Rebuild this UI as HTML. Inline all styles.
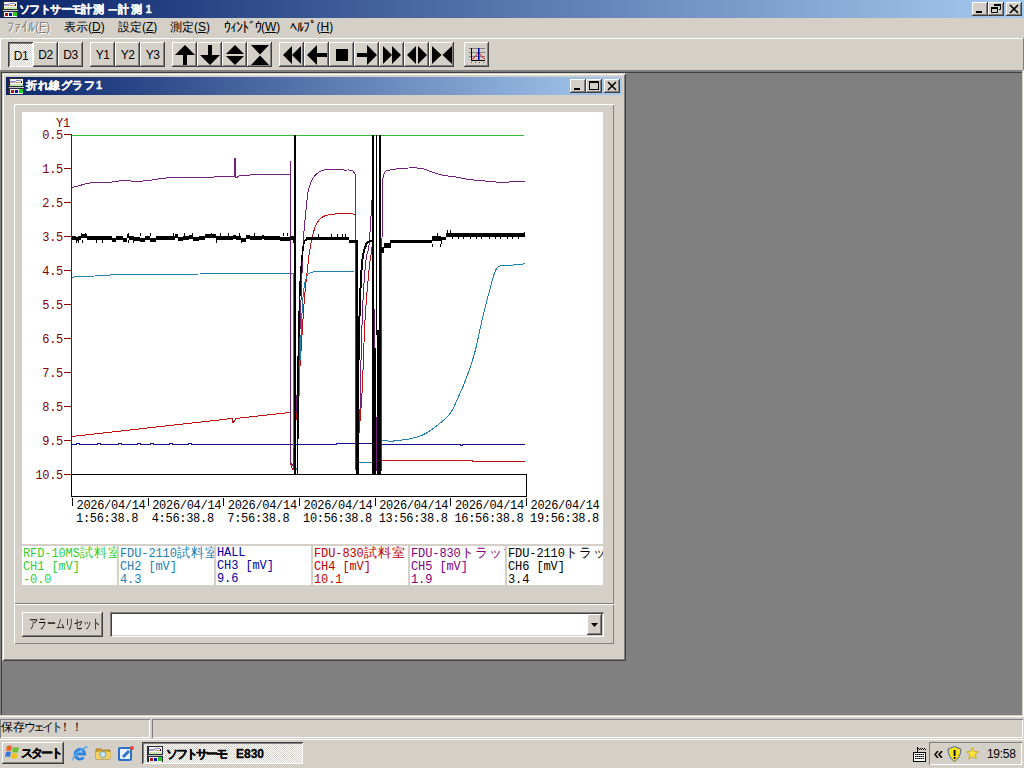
<!DOCTYPE html>
<html><head><meta charset="utf-8">
<style>
*{box-sizing:border-box}
html,body{margin:0;padding:0}
body{width:1024px;height:768px;position:relative;overflow:hidden;background:#D4D0C8;font-family:"Liberation Sans",sans-serif;font-size:12px;color:#000}
.a{position:absolute}
.raised{background:#D4D0C8;box-shadow:inset -1px -1px #404040,inset 1px 1px #fff,inset -2px -2px #808080}
.tbtn{position:absolute;top:42px;width:25px;height:25px;background:#D4D0C8;box-shadow:inset -1px -1px #404040,inset 1px 1px #fff,inset -2px -2px #808080}
.tbtn span{position:absolute;left:0;right:0;top:6px;text-align:center;font-size:12px;letter-spacing:-0.5px;line-height:14px}
.tbtn svg{position:absolute;left:0;top:0}
.dither{background-color:#D4D0C8;background-image:repeating-conic-gradient(#fff 0 25%,#D4D0C8 0 50%);background-size:2px 2px}
.capbtn{position:absolute;width:16px;height:14px;background:#D4D0C8;box-shadow:inset -1px -1px #404040,inset 1px 1px #fff,inset -2px -2px #808080}
.capbtn svg{position:absolute;left:0;top:0}
.menu{position:absolute;top:20px;font-size:12px;line-height:14px;white-space:nowrap}
.hk{font-size:14px;letter-spacing:0px;vertical-align:-1px}
.mono{font-family:"Liberation Mono",monospace}
.lg{top:546px;height:39px;background:#fff;overflow:hidden;white-space:nowrap;font-family:"Liberation Mono",monospace;font-size:12px;letter-spacing:-0.1px;line-height:13px;padding-left:1px;padding-top:1px}
.cj{font-size:13px;letter-spacing:1px}
</style></head><body>

<!-- main title bar -->
<div class="a" style="left:0;top:0;width:1024px;height:18px;background:linear-gradient(to right,#0A246A,#A6CAF0)"></div>
<svg class="a" style="left:2px;top:1px" width="16" height="16" viewBox="0 0 16 16">
<rect x="0" y="0" width="16" height="16" fill="#2a2a3a"/>
<rect x="2" y="1" width="13" height="7" fill="#f8f8f8"/>
<rect x="2" y="3" width="6" height="1" fill="#9090d0"/><rect x="8" y="2" width="5" height="1" fill="#9090d0"/>
<rect x="2" y="4" width="5" height="1" fill="#c0a0c0"/><rect x="8" y="4" width="5" height="1" fill="#e0a060"/>
<rect x="13" y="3" width="1" height="2" fill="#400040"/>
<rect x="2" y="6" width="13" height="2" fill="#c8e8b0"/>
<rect x="1" y="9" width="15" height="1" fill="#c8c8c8"/>
<rect x="2" y="11" width="13" height="5" fill="#f8f8f8"/>
<rect x="3" y="12" width="3" height="3" fill="#b01010"/>
<rect x="7" y="12" width="3" height="3" fill="#0010b0"/>
<rect x="11" y="11" width="4" height="4" fill="#20d020"/>
</svg>
<div class="a" style="left:19px;top:2px;color:#fff;font-weight:bold;font-size:11px;line-height:14px;white-space:nowrap;letter-spacing:0px;-webkit-text-stroke:0.3px #fff"><span style="letter-spacing:-0.6px">ソフトサーモ</span><span style="letter-spacing:1px">計測</span><span style="margin-left:2px;display:inline-block;transform:scaleX(1.6)">－</span><span style="letter-spacing:1.5px;margin-left:0px">計測</span><span style="margin-left:2px">1</span></div>
<div class="capbtn" style="left:972px;top:2px"><svg width="16" height="14"><rect x="4" y="9" width="6" height="2" fill="#000"/></svg></div>
<div class="capbtn" style="left:988px;top:2px"><svg width="16" height="14"><path d="M6.5 2.5h6v5h-1.5M6 3h6.5M3.5 5.5h6v5h-6z M3.5 6h6" stroke="#000" fill="none"/><rect x="6" y="2" width="7" height="2" fill="#000"/><rect x="3" y="5" width="7" height="2" fill="#000"/></svg></div>
<div class="capbtn" style="left:1006px;top:2px"><svg width="16" height="14"><path d="M4 3l8 8M12 3l-8 8" stroke="#000" stroke-width="1.6"/></svg></div>

<!-- menu -->
<div class="menu" style="left:7px;color:#808080;text-shadow:1px 1px #fff"><span class="hk">ﾌｧｲﾙ</span>(<u>F</u>)</div>
<div class="menu" style="left:64px">表示(<u>D</u>)</div>
<div class="menu" style="left:118px">設定(<u>Z</u>)</div>
<div class="menu" style="left:170px">測定(<u>S</u>)</div>
<div class="menu" style="left:224px"><span class="hk" style="letter-spacing:-1px">ｳｨﾝﾄﾞｳ</span>(<u>W</u>)</div>
<div class="menu" style="left:290px"><span class="hk" style="letter-spacing:-0.5px">ﾍﾙﾌﾟ</span>(<u>H</u>)</div>

<!-- toolbar -->
<div class="a" style="left:0;top:38px;width:1024px;height:1px;background:#fff"></div>
<div class="a" style="left:0;top:38px;width:1px;height:32px;background:#fff"></div>
<div class="a" style="left:1023px;top:38px;width:1px;height:32px;background:#808080"></div>

<div class="tbtn dither" style="left:8px;box-shadow:inset 1px 1px #404040,inset -1px -1px #fff,inset 2px 2px #808080"><span style="top:7px;left:1px">D1</span></div>
<div class="tbtn" style="left:33px"><span>D2</span></div>
<div class="tbtn" style="left:58px"><span>D3</span></div>
<div class="tbtn" style="left:90px"><span>Y1</span></div>
<div class="tbtn" style="left:115px"><span>Y2</span></div>
<div class="tbtn" style="left:140px"><span>Y3</span></div>
<div class="tbtn" style="left:172px"><svg width="25" height="25" fill="#000"><path d="M3 13L13 3L23 13Z" /><rect x="11" y="12.5" width="4" height="10.5"/></svg></div>
<div class="tbtn" style="left:197px"><svg width="25" height="25" fill="#000"><rect x="11" y="3" width="4" height="10.5"/><path d="M3 13L23 13L13 23Z"/></svg></div>
<div class="tbtn" style="left:222px"><svg width="25" height="25" fill="#000"><path d="M4 12L13 3L22 12Z"/><path d="M4 14L22 14L13 23Z"/></svg></div>
<div class="tbtn" style="left:247px"><svg width="25" height="25" fill="#000"><path d="M4 3H22L13 12.5Z"/><path d="M13 13.5L22 23H4Z"/></svg></div>
<div class="tbtn" style="left:279px"><svg width="25" height="25" fill="#000"><path d="M4 13L13 4V22Z"/><path d="M13 13L22 4V22Z"/></svg></div>
<div class="tbtn" style="left:304px"><svg width="25" height="25" fill="#000"><path d="M3 13L13 3V23Z"/><rect x="12.5" y="11" width="10.5" height="4"/></svg></div>
<div class="tbtn" style="left:329px"><svg width="25" height="25" fill="#000"><rect x="7" y="7" width="12" height="12"/></svg></div>
<div class="tbtn" style="left:354px"><svg width="25" height="25" fill="#000"><rect x="3" y="11" width="10.5" height="4"/><path d="M23 13L13 3V23Z"/></svg></div>
<div class="tbtn" style="left:379px"><svg width="25" height="25" fill="#000"><path d="M4 4L13 13L4 22Z"/><path d="M13 4L22 13L13 22Z"/></svg></div>
<div class="tbtn" style="left:404px"><svg width="25" height="25" fill="#000"><path d="M3 13L12 4V22Z"/><path d="M23 13L14 4V22Z"/></svg></div>
<div class="tbtn" style="left:429px"><svg width="25" height="25" fill="#000"><path d="M3 4L12.5 13L3 22Z"/><path d="M23 4L13.5 13L23 22Z"/></svg></div>
<div class="tbtn" style="left:464px"><svg width="25" height="25" shape-rendering="crispEdges">
<rect x="5" y="6" width="16" height="1" fill="#808080"/><rect x="5" y="10" width="16" height="1" fill="#808080"/><rect x="5" y="14" width="16" height="1" fill="#808080"/>
<path d="M8 17 L10 16 L13 12 L14.5 10.5 L16 12 L19 16 L21 17" stroke="#e02020" stroke-width="1" fill="none" shape-rendering="auto"/>
<rect x="14" y="6" width="1.5" height="12" fill="#0000a0" shape-rendering="auto"/>
<rect x="7" y="6" width="1" height="13" fill="#000"/><rect x="7" y="18" width="14" height="1" fill="#000"/>
<rect x="7" y="20" width="1" height="1" fill="#606060"/><rect x="11" y="20" width="1" height="1" fill="#606060"/><rect x="15" y="20" width="1" height="1" fill="#606060"/><rect x="19" y="20" width="1" height="1" fill="#606060"/>
</svg></div>

<!-- MDI client -->
<div class="a" style="left:0;top:70px;width:1024px;height:647px;background:#808080"></div>
<div class="a" style="left:0;top:70px;width:1024px;height:2px;background:#808080"></div>
<div class="a" style="left:1px;top:72px;width:1021px;height:1px;background:#404040"></div>
<div class="a" style="left:1px;top:72px;width:1px;height:643px;background:#404040"></div>
<div class="a" style="left:0;top:715px;width:1024px;height:1px;background:#D4D0C8"></div>
<div class="a" style="left:0;top:716px;width:1024px;height:1px;background:#fff"></div>
<div class="a" style="left:1022px;top:71px;width:1px;height:645px;background:#D4D0C8"></div>
<div class="a" style="left:1023px;top:70px;width:1px;height:647px;background:#fff"></div>

<!-- child window -->
<div class="a" style="left:2px;top:73px;width:624px;height:588px;background:#D4D0C8;box-shadow:inset 1px 1px #D4D0C8,inset -1px -1px #404040,inset 2px 2px #fff,inset -2px -2px #808080"></div>
<div class="a" style="left:6px;top:77px;width:616px;height:18px;background:linear-gradient(to right,#0A246A,#A6CAF0)"></div>
<svg class="a" style="left:8px;top:78px" width="16" height="16" viewBox="0 0 16 16">
<rect x="0" y="0" width="16" height="16" fill="#2a2a3a"/>
<rect x="2" y="1" width="13" height="7" fill="#f8f8f8"/>
<rect x="2" y="3" width="6" height="1" fill="#9090d0"/><rect x="8" y="2" width="5" height="1" fill="#9090d0"/>
<rect x="2" y="4" width="5" height="1" fill="#c0a0c0"/><rect x="8" y="4" width="5" height="1" fill="#e0a060"/>
<rect x="13" y="3" width="1" height="2" fill="#400040"/>
<rect x="2" y="6" width="13" height="2" fill="#c8e8b0"/>
<rect x="1" y="9" width="15" height="1" fill="#c8c8c8"/>
<rect x="2" y="11" width="13" height="5" fill="#f8f8f8"/>
<rect x="3" y="12" width="3" height="3" fill="#b01010"/>
<rect x="7" y="12" width="3" height="3" fill="#0010b0"/>
<rect x="11" y="11" width="4" height="4" fill="#20d020"/>
</svg>
<div class="a" style="left:26px;top:78px;color:#fff;font-weight:bold;font-size:11px;line-height:14px;white-space:nowrap;-webkit-text-stroke:0.3px #fff"><span style="letter-spacing:0.5px">折れ線グラフ</span><span style="margin-left:1px">1</span></div>
<div class="capbtn" style="left:570px;top:79px"><svg width="16" height="14"><rect x="4" y="9" width="6" height="2" fill="#000"/></svg></div>
<div class="capbtn" style="left:586px;top:79px"><svg width="16" height="14"><rect x="3.5" y="2.5" width="9" height="8" stroke="#000" fill="none"/><rect x="3" y="2" width="10" height="2" fill="#000"/></svg></div>
<div class="capbtn" style="left:604px;top:79px"><svg width="16" height="14"><path d="M4 3l8 8M12 3l-8 8" stroke="#000" stroke-width="1.6"/></svg></div>

<!-- upper panel -->
<div class="a" style="left:14px;top:104px;width:600px;height:500px;box-shadow:inset 1px 1px #fff,inset -1px -1px #808080"></div>
<div class="a" style="left:22px;top:112px;width:581px;height:432px;background:#fff"></div>
<svg class="a" style="left:22px;top:112px" width="581" height="432" viewBox="22 112 581 432">
<g shape-rendering="crispEdges">
<rect x="71" y="134" width="1" height="341" fill="#800000"/>
<rect x="64" y="134" width="7" height="1" fill="#800000"/>
<rect x="64" y="168" width="7" height="1" fill="#800000"/>
<rect x="64" y="202" width="7" height="1" fill="#800000"/>
<rect x="64" y="236" width="7" height="1" fill="#800000"/>
<rect x="64" y="270" width="7" height="1" fill="#800000"/>
<rect x="64" y="304" width="7" height="1" fill="#800000"/>
<rect x="64" y="338" width="7" height="1" fill="#800000"/>
<rect x="64" y="372" width="7" height="1" fill="#800000"/>
<rect x="64" y="406" width="7" height="1" fill="#800000"/>
<rect x="64" y="440" width="7" height="1" fill="#800000"/>
<rect x="64" y="474" width="7" height="1" fill="#800000"/>
<rect x="71.5" y="474.5" width="455" height="22" fill="none" stroke="#000" stroke-width="1"/>
<rect x="72" y="498" width="1" height="8" fill="#000"/>
<rect x="148" y="498" width="1" height="8" fill="#000"/>
<rect x="223" y="498" width="1" height="8" fill="#000"/>
<rect x="299" y="498" width="1" height="8" fill="#000"/>
<rect x="375" y="498" width="1" height="8" fill="#000"/>
<rect x="450" y="498" width="1" height="8" fill="#000"/>
<rect x="526" y="498" width="1" height="8" fill="#000"/>
</g>
<g font-family="Liberation Mono, monospace" font-size="12" letter-spacing="-0.3">
<text x="56" y="127" fill="#800000">Y1</text>
<text x="63" y="138.5" fill="#800000" text-anchor="end">0.5</text>
<text x="63" y="172.5" fill="#800000" text-anchor="end">1.5</text>
<text x="63" y="206.5" fill="#800000" text-anchor="end">2.5</text>
<text x="63" y="240.5" fill="#800000" text-anchor="end">3.5</text>
<text x="63" y="274.5" fill="#800000" text-anchor="end">4.5</text>
<text x="63" y="308.5" fill="#800000" text-anchor="end">5.5</text>
<text x="63" y="342.5" fill="#800000" text-anchor="end">6.5</text>
<text x="63" y="376.5" fill="#800000" text-anchor="end">7.5</text>
<text x="63" y="410.5" fill="#800000" text-anchor="end">8.5</text>
<text x="63" y="444.5" fill="#800000" text-anchor="end">9.5</text>
<text x="63" y="478.5" fill="#800000" text-anchor="end">10.5</text>
<text x="76.5" y="509" fill="#000">2026/04/14</text>
<text x="76.0" y="522" fill="#000">1:56:38.8</text>
<text x="152.2" y="509" fill="#000">2026/04/14</text>
<text x="151.7" y="522" fill="#000">4:56:38.8</text>
<text x="227.8" y="509" fill="#000">2026/04/14</text>
<text x="227.3" y="522" fill="#000">7:56:38.8</text>
<text x="303.5" y="509" fill="#000">2026/04/14</text>
<text x="303.0" y="522" fill="#000">10:56:38.8</text>
<text x="379.2" y="509" fill="#000">2026/04/14</text>
<text x="378.7" y="522" fill="#000">13:56:38.8</text>
<text x="454.9" y="509" fill="#000">2026/04/14</text>
<text x="454.4" y="522" fill="#000">16:56:38.8</text>
<text x="530.5" y="509" fill="#000">2026/04/14</text>
<text x="530.0" y="522" fill="#000">19:56:38.8</text>
</g>
<polyline points="72,135.5 524,135.5" fill="none" stroke="#33bb33" stroke-width="1" shape-rendering="crispEdges"/>
<polyline points="72,444.5 76,444.5 76,443.5 79,443.5 79,444.5 97,444.5 97,443.5 100,443.5 100,444.5 118,444.5 118,443.5 121,443.5 121,444.5 137,444.5 137,443.5 140,443.5 140,444.5 150,444.5 150,443.5 153,443.5 153,444.5 169,444.5 169,443.5 172,443.5 172,444.5 188,444.5 188,443.5 191,443.5 191,444.5 336,444.5 337,443.5 372,443.5 381,444.5 460,444.5 460,445.5 462,445.5 462,444.5 525,444.5" fill="none" stroke="#101090" stroke-width="1" shape-rendering="crispEdges"/>
<polyline points="72,436.5 232,418.5 233,423 236,418.5 290,412.5 290.5,464 293,470 296,420 296.02,419.75 296.04,419.48 296.06,419.21 296.08,418.93 296.1,418.65 296.12,418.35 296.14,418.05 296.17,417.74 296.19,417.43 296.21,417.1 296.24,416.77 296.26,416.43 296.29,416.08 296.32,415.73 296.34,415.37 296.37,415 296.4,414.63 296.43,414.25 296.46,413.86 296.48,413.47 296.51,413.07 296.54,412.67 296.58,412.26 296.61,411.84 296.64,411.42 296.67,410.99 296.7,410.55 296.74,410.11 296.77,409.67 296.8,409.22 296.84,408.76 296.87,408.3 296.91,407.84 296.94,407.37 296.98,406.89 297.01,406.41 297.05,405.93 297.09,405.44 297.12,404.94 297.16,404.44 297.2,403.94 297.23,403.44 297.27,402.93 297.31,402.41 297.35,401.89 297.39,401.37 297.43,400.85 297.47,400.32 297.51,399.79 297.55,399.25 297.59,398.72 297.63,398.17 297.67,397.63 297.71,397.08 297.75,396.53 297.79,395.98 297.83,395.43 297.87,394.87 297.91,394.31 297.96,393.75 298,393.19 298.04,392.62 298.08,392.05 298.12,391.48 298.17,390.91 298.21,390.34 298.25,389.77 298.29,389.19 298.34,388.62 298.38,388.04 298.42,387.46 298.46,386.88 298.51,386.3 298.55,385.72 298.59,385.14 298.64,384.55 298.68,383.97 298.72,383.39 298.76,382.81 298.81,382.22 298.85,381.64 298.89,381.06 298.94,380.47 298.98,379.89 299.02,379.31 299.06,378.73 299.11,378.14 299.15,377.56 299.19,376.98 299.23,376.41 299.27,375.83 299.32,375.25 299.36,374.68 299.4,374.1 299.44,373.53 299.48,372.96 299.52,372.39 299.56,371.82 299.6,371.26 299.64,370.69 299.68,370.13 299.73,369.57 299.76,369.02 299.8,368.46 299.84,367.91 299.88,367.36 299.92,366.81 299.96,366.27 300,365.73 300.04,365.19 300.07,364.66 300.11,364.12 300.15,363.6 300.19,363.07 300.22,362.55 300.26,362.03 300.29,361.52 300.33,361.01 300.37,360.5 300.4,360 300.43,359.5 300.47,359 300.5,358.49 300.54,357.98 300.57,357.48 300.61,356.96 300.64,356.45 300.68,355.94 300.71,355.42 300.75,354.9 300.78,354.39 300.81,353.87 300.85,353.34 300.88,352.82 300.92,352.29 300.95,351.77 300.99,351.24 301.02,350.71 301.05,350.18 301.09,349.65 301.12,349.12 301.16,348.59 301.19,348.05 301.22,347.52 301.26,346.98 301.29,346.45 301.33,345.91 301.36,345.37 301.39,344.84 301.43,344.3 301.46,343.76 301.5,343.22 301.53,342.68 301.56,342.14 301.6,341.6 301.63,341.05 301.67,340.51 301.7,339.97 301.73,339.43 301.77,338.89 301.8,338.35 301.83,337.81 301.87,337.26 301.9,336.72 301.93,336.18 301.97,335.64 302,335.1 302.03,334.56 302.07,334.02 302.1,333.48 302.13,332.94 302.17,332.4 302.2,331.87 302.23,331.33 302.27,330.79 302.3,330.26 302.33,329.72 302.37,329.19 302.4,328.66 302.43,328.12 302.46,327.59 302.5,327.06 302.53,326.54 302.56,326.01 302.59,325.48 302.63,324.96 302.66,324.43 302.69,323.91 302.72,323.39 302.76,322.87 302.79,322.36 302.82,321.84 302.85,321.33 302.89,320.81 302.92,320.3 302.95,319.79 302.98,319.29 303.01,318.78 303.05,318.28 303.08,317.78 303.11,317.28 303.14,316.78 303.17,316.29 303.2,315.79 303.24,315.3 303.27,314.82 303.3,314.33 303.33,313.85 303.36,313.37 303.39,312.89 303.42,312.42 303.46,311.94 303.49,311.47 303.52,311.01 303.55,310.54 303.58,310.08 303.61,309.62 303.64,309.17 303.67,308.71 303.7,308.26 303.73,307.82 303.76,307.37 303.79,306.93 303.82,306.5 303.85,306.06 303.88,305.63 303.91,305.21 303.94,304.79 303.97,304.37 304,303.95 304.03,303.54 304.06,303.13 304.09,302.72 304.12,302.32 304.15,301.93 304.18,301.53 304.21,301.14 304.24,300.76 304.27,300.38 304.3,300 304.36,299.26 304.42,298.53 304.47,297.81 304.53,297.11 304.59,296.42 304.65,295.74 304.7,295.07 304.76,294.42 304.82,293.78 304.87,293.15 304.93,292.53 304.98,291.92 305.04,291.32 305.09,290.73 305.15,290.16 305.2,289.59 305.26,289.03 305.31,288.48 305.36,287.94 305.42,287.41 305.47,286.88 305.53,286.37 305.58,285.86 305.63,285.36 305.68,284.87 305.74,284.38 305.79,283.9 305.84,283.43 305.89,282.96 305.94,282.5 306,282.04 306.05,281.59 306.1,281.15 306.15,280.71 306.2,280.27 306.25,279.84 306.3,279.41 306.35,278.99 306.4,278.57 306.45,278.15 306.5,277.73 306.55,277.32 306.6,276.91 306.64,276.5 306.69,276.09 306.74,275.69 306.79,275.28 306.84,274.88 306.89,274.48 306.93,274.07 306.98,273.67 307.03,273.27 307.08,272.86 307.12,272.46 307.17,272.05 307.22,271.65 307.26,271.24 307.31,270.83 307.35,270.42 307.4,270 307.47,269.38 307.53,268.77 307.6,268.17 307.66,267.59 307.72,267.01 307.78,266.44 307.84,265.88 307.9,265.33 307.96,264.79 308.01,264.26 308.07,263.73 308.12,263.21 308.18,262.7 308.23,262.2 308.29,261.7 308.34,261.2 308.39,260.71 308.44,260.23 308.5,259.75 308.55,259.28 308.6,258.8 308.66,258.33 308.71,257.87 308.77,257.4 308.82,256.94 308.88,256.48 308.93,256.03 308.99,255.57 309.05,255.11 309.11,254.65 309.17,254.2 309.24,253.74 309.3,253.28 309.37,252.82 309.43,252.36 309.5,251.89 309.57,251.42 309.65,250.95 309.72,250.48 309.8,250 309.89,249.48 309.97,248.95 310.06,248.43 310.16,247.9 310.25,247.36 310.35,246.83 310.44,246.29 310.54,245.75 310.64,245.22 310.75,244.68 310.85,244.14 310.95,243.6 311.06,243.06 311.17,242.53 311.27,242 311.38,241.46 311.49,240.94 311.6,240.41 311.71,239.89 311.82,239.37 311.93,238.86 312.05,238.35 312.16,237.85 312.27,237.35 312.38,236.86 312.49,236.37 312.61,235.9 312.72,235.43 312.83,234.96 312.94,234.51 313.05,234.07 313.16,233.63 313.27,233.2 313.38,232.79 313.49,232.38 313.59,231.98 313.7,231.6 313.89,230.92 314.08,230.26 314.27,229.64 314.46,229.05 314.64,228.48 314.82,227.94 315.01,227.42 315.19,226.92 315.37,226.44 315.56,225.98 315.74,225.54 315.93,225.11 316.12,224.69 316.32,224.29 316.52,223.89 316.72,223.5 316.93,223.12 317.15,222.75 317.37,222.37 317.6,222 317.91,221.52 318.23,221.05 318.54,220.62 318.87,220.2 319.2,219.8 319.53,219.43 319.88,219.07 320.23,218.72 320.59,218.4 320.96,218.09 321.34,217.79 321.74,217.5 322.14,217.22 322.56,216.96 323,216.7 323.42,216.47 323.86,216.26 324.31,216.06 324.77,215.87 325.24,215.7 325.73,215.54 326.22,215.39 326.72,215.26 327.23,215.13 327.74,215.01 328.26,214.89 328.78,214.79 329.31,214.68 329.84,214.59 330.37,214.49 330.9,214.4 331.37,214.32 331.85,214.26 332.34,214.2 332.82,214.15 333.32,214.1 333.81,214.06 334.31,214.03 334.81,214 335.32,213.97 335.83,213.95 336.34,213.93 336.86,213.91 337.37,213.9 337.89,213.88 338.42,213.86 338.94,213.84 339.47,213.82 340,213.8 340.49,213.78 341.01,213.76 341.55,213.74 342.1,213.72 342.67,213.7 343.25,213.68 343.83,213.66 344.42,213.64 345,213.63 345.57,213.61 346.13,213.6 346.68,213.58 347.2,213.57 347.71,213.56 348.18,213.55 348.63,213.54 349.03,213.53 349.4,213.52 349.72,213.51 350,213.5 355.6,214.4 356,470 358,445 358.02,444.75 358.04,444.48 358.06,444.22 358.08,443.94 358.11,443.66 358.13,443.36 358.15,443.07 358.18,442.76 358.21,442.45 358.23,442.13 358.26,441.8 358.29,441.47 358.32,441.13 358.34,440.79 358.37,440.43 358.41,440.07 358.44,439.71 358.47,439.34 358.5,438.96 358.53,438.58 358.57,438.19 358.6,437.79 358.64,437.39 358.67,436.98 358.71,436.57 358.74,436.15 358.78,435.72 358.82,435.29 358.85,434.86 358.89,434.42 358.93,433.97 358.97,433.52 359.01,433.07 359.05,432.61 359.09,432.14 359.13,431.67 359.17,431.2 359.21,430.72 359.25,430.23 359.29,429.74 359.33,429.25 359.38,428.75 359.42,428.25 359.46,427.75 359.51,427.24 359.55,426.72 359.59,426.2 359.64,425.68 359.68,425.16 359.72,424.63 359.77,424.1 359.81,423.56 359.86,423.02 359.9,422.48 359.95,421.94 359.99,421.39 360.04,420.84 360.08,420.28 360.13,419.72 360.17,419.16 360.22,418.6 360.26,418.03 360.31,417.47 360.35,416.9 360.4,416.32 360.44,415.75 360.49,415.17 360.53,414.59 360.58,414.01 360.62,413.43 360.67,412.84 360.71,412.25 360.76,411.66 360.8,411.07 360.84,410.48 360.89,409.89 360.93,409.29 360.98,408.7 361.02,408.1 361.06,407.5 361.11,406.9 361.15,406.3 361.19,405.7 361.23,405.09 361.28,404.49 361.32,403.89 361.36,403.28 361.4,402.68 361.44,402.07 361.48,401.47 361.52,400.86 361.56,400.25 361.6,399.65 361.64,399.04 361.68,398.44 361.71,397.83 361.75,397.22 361.79,396.62 361.83,396.01 361.86,395.41 361.9,394.81 361.93,394.2 361.97,393.6 362,393 362.02,392.57 362.05,392.14 362.07,391.7 362.09,391.26 362.12,390.82 362.14,390.38 362.16,389.93 362.19,389.48 362.21,389.03 362.23,388.57 362.26,388.12 362.28,387.66 362.3,387.19 362.32,386.73 362.34,386.26 362.37,385.79 362.39,385.32 362.41,384.84 362.43,384.36 362.45,383.89 362.48,383.4 362.5,382.92 362.52,382.43 362.54,381.95 362.56,381.46 362.58,380.96 362.6,380.47 362.62,379.97 362.64,379.48 362.66,378.98 362.69,378.47 362.71,377.97 362.73,377.47 362.75,376.96 362.77,376.45 362.79,375.94 362.81,375.43 362.83,374.92 362.85,374.41 362.87,373.89 362.89,373.37 362.91,372.85 362.93,372.34 362.95,371.81 362.97,371.29 362.99,370.77 363,370.25 363.02,369.72 363.04,369.19 363.06,368.67 363.08,368.14 363.1,367.61 363.12,367.08 363.14,366.55 363.16,366.02 363.18,365.49 363.2,364.95 363.22,364.42 363.24,363.89 363.25,363.35 363.27,362.82 363.29,362.28 363.31,361.75 363.33,361.21 363.35,360.67 363.37,360.14 363.39,359.6 363.41,359.06 363.42,358.53 363.44,357.99 363.46,357.45 363.48,356.91 363.5,356.38 363.52,355.84 363.54,355.3 363.56,354.76 363.58,354.23 363.59,353.69 363.61,353.15 363.63,352.61 363.65,352.08 363.67,351.54 363.69,351.01 363.71,350.47 363.73,349.94 363.75,349.4 363.76,348.87 363.78,348.34 363.8,347.81 363.82,347.28 363.84,346.75 363.86,346.22 363.88,345.69 363.9,345.16 363.92,344.63 363.94,344.11 363.96,343.58 363.98,343.06 364,342.54 364.01,342.01 364.03,341.49 364.05,340.97 364.07,340.46 364.09,339.94 364.11,339.43 364.13,338.91 364.15,338.4 364.17,337.89 364.19,337.38 364.21,336.87 364.23,336.37 364.25,335.86 364.27,335.36 364.29,334.86 364.31,334.36 364.34,333.86 364.36,333.37 364.38,332.87 364.4,332.38 364.42,331.89 364.44,331.4 364.46,330.92 364.48,330.43 364.5,329.95 364.52,329.47 364.55,329 364.57,328.52 364.59,328.05 364.61,327.58 364.63,327.11 364.66,326.65 364.68,326.19 364.7,325.73 364.72,325.27 364.74,324.81 364.77,324.36 364.79,323.91 364.81,323.47 364.84,323.02 364.86,322.58 364.88,322.14 364.91,321.71 364.93,321.28 364.95,320.85 364.98,320.42 365,320 365.04,319.39 365.07,318.77 365.11,318.16 365.14,317.55 365.18,316.94 365.22,316.33 365.25,315.72 365.29,315.12 365.33,314.51 365.37,313.91 365.41,313.31 365.45,312.71 365.49,312.11 365.53,311.51 365.56,310.92 365.61,310.33 365.65,309.73 365.69,309.14 365.73,308.55 365.77,307.97 365.81,307.38 365.85,306.8 365.89,306.22 365.93,305.64 365.98,305.06 366.02,304.49 366.06,303.91 366.1,303.34 366.15,302.77 366.19,302.21 366.23,301.64 366.28,301.08 366.32,300.52 366.36,299.96 366.41,299.41 366.45,298.85 366.49,298.3 366.54,297.75 366.58,297.21 366.62,296.66 366.67,296.12 366.71,295.58 366.76,295.05 366.8,294.52 366.84,293.99 366.89,293.46 366.93,292.93 366.97,292.41 367.02,291.89 367.06,291.38 367.11,290.86 367.15,290.35 367.19,289.84 367.24,289.34 367.28,288.84 367.32,288.34 367.37,287.84 367.41,287.35 367.45,286.86 367.5,286.38 367.54,285.89 367.58,285.41 367.62,284.94 367.67,284.47 367.71,284 367.75,283.53 367.79,283.07 367.83,282.61 367.87,282.15 367.92,281.7 367.96,281.26 368,280.81 368.04,280.37 368.08,279.93 368.12,279.5 368.16,279.07 368.2,278.65 368.23,278.22 368.27,277.81 368.31,277.39 368.35,276.98 368.39,276.58 368.43,276.17 368.46,275.78 368.5,275.38 368.54,274.99 368.57,274.61 368.61,274.23 368.64,273.85 368.68,273.48 368.71,273.11 368.74,272.75 368.78,272.39 368.81,272.03 368.84,271.68 368.88,271.34 368.91,271 368.94,270.66 368.97,270.33 369,270 369.1,268.95 369.19,267.98 369.28,267.08 369.37,266.25 369.45,265.47 369.53,264.76 369.6,264.1 369.68,263.49 369.75,262.93 369.81,262.41 369.88,261.93 369.94,261.48 370.01,261.06 370.07,260.68 370.12,260.31 370.18,259.97 370.24,259.64 370.3,259.32 370.35,259.01 370.41,258.7 370.46,258.4 370.52,258.09 370.58,257.77 370.63,257.44 370.69,257.09 370.75,256.73 370.81,256.34 370.87,255.93 370.93,255.48 371,255 371.07,254.49 371.14,253.97 371.21,253.43 371.28,252.88 371.36,252.33 371.43,251.76 371.51,251.19 371.59,250.61 371.66,250.03 371.74,249.44 371.82,248.86 371.9,248.28 371.97,247.7 372.05,247.13 372.12,246.56 372.2,246 372.27,245.46 372.34,244.92 372.41,244.4 372.48,243.89 372.55,243.4 372.61,242.92 372.67,242.47 372.73,242.04 372.78,241.63 372.83,241.25 372.88,240.89 372.92,240.56 372.96,240.27 373,240 376,470 380,460.5 472,460.5 473,461.5 525,461.5" fill="none" stroke="#c01010" stroke-width="1" shape-rendering="crispEdges"/>
<polyline points="72,278 75,276.5 95,276 110,275 150,274.5 200,274 260,273.5 293,273.5 293,462 297,470 300,360 300.01,359.74 300.02,359.48 300.04,359.2 300.05,358.91 300.06,358.62 300.07,358.31 300.09,357.99 300.1,357.66 300.12,357.32 300.13,356.98 300.15,356.62 300.16,356.25 300.18,355.88 300.19,355.5 300.21,355.1 300.23,354.7 300.24,354.3 300.26,353.88 300.28,353.45 300.29,353.02 300.31,352.58 300.33,352.13 300.35,351.68 300.37,351.22 300.39,350.75 300.41,350.27 300.43,349.79 300.44,349.3 300.46,348.81 300.48,348.3 300.51,347.8 300.53,347.29 300.55,346.77 300.57,346.24 300.59,345.72 300.61,345.18 300.63,344.64 300.65,344.1 300.68,343.55 300.7,343 300.72,342.44 300.74,341.88 300.77,341.32 300.79,340.75 300.81,340.18 300.84,339.61 300.86,339.03 300.88,338.45 300.91,337.86 300.93,337.28 300.95,336.69 300.98,336.1 301,335.51 301.03,334.91 301.05,334.32 301.08,333.72 301.1,333.12 301.13,332.52 301.15,331.92 301.18,331.31 301.2,330.71 301.23,330.11 301.25,329.5 301.28,328.9 301.31,328.29 301.33,327.69 301.36,327.08 301.38,326.48 301.41,325.88 301.44,325.27 301.46,324.67 301.49,324.07 301.52,323.47 301.54,322.88 301.57,322.28 301.6,321.69 301.62,321.09 301.65,320.51 301.68,319.92 301.7,319.33 301.73,318.75 301.76,318.17 301.78,317.6 301.81,317.02 301.84,316.45 301.86,315.89 301.89,315.33 301.92,314.77 301.94,314.21 301.97,313.66 302,313.12 302.02,312.58 302.05,312.04 302.08,311.51 302.1,310.98 302.13,310.46 302.16,309.95 302.18,309.44 302.21,308.94 302.24,308.44 302.26,307.95 302.29,307.46 302.32,306.98 302.34,306.51 302.37,306.04 302.39,305.59 302.42,305.13 302.45,304.69 302.47,304.25 302.5,303.83 302.52,303.4 302.55,302.99 302.57,302.59 302.6,302.19 302.63,301.8 302.65,301.42 302.68,301.05 302.7,300.69 302.73,300.34 302.75,300 302.82,299.05 302.89,298.14 302.96,297.26 303.03,296.42 303.1,295.6 303.17,294.82 303.24,294.07 303.31,293.35 303.38,292.65 303.45,291.98 303.52,291.34 303.59,290.72 303.66,290.13 303.74,289.56 303.81,289.01 303.88,288.48 303.95,287.97 304.02,287.48 304.09,287.01 304.17,286.56 304.24,286.12 304.31,285.7 304.39,285.3 304.46,284.9 304.54,284.52 304.61,284.15 304.69,283.79 304.76,283.44 304.84,283.1 304.92,282.77 305,282.44 305.08,282.12 305.15,281.8 305.23,281.49 305.32,281.18 305.4,280.87 305.48,280.56 305.56,280.26 305.64,279.95 305.73,279.63 305.81,279.32 305.9,279 306.15,278.1 306.38,277.32 306.61,276.64 306.83,276.06 307.05,275.57 307.28,275.14 307.52,274.78 307.78,274.47 308.06,274.2 308.37,273.95 308.71,273.72 309.1,273.49 309.52,273.25 310,273 310.36,272.82 310.74,272.66 311.13,272.52 311.54,272.39 311.97,272.28 312.41,272.18 312.86,272.09 313.34,272.02 313.82,271.95 314.32,271.89 314.83,271.84 315.36,271.8 315.9,271.76 316.45,271.72 317.01,271.69 317.59,271.65 318.17,271.62 318.77,271.58 319.38,271.54 320,271.5 320.43,271.47 320.89,271.44 321.37,271.42 321.87,271.4 322.38,271.38 322.92,271.36 323.47,271.34 324.03,271.33 324.61,271.31 325.19,271.3 325.77,271.29 326.36,271.28 326.95,271.27 327.54,271.26 328.12,271.26 328.71,271.25 329.28,271.25 329.84,271.24 330.39,271.24 330.93,271.23 331.44,271.23 331.95,271.23 332.42,271.22 332.88,271.22 333.31,271.22 333.71,271.22 334.08,271.21 334.43,271.21 334.73,271.2 335,271.2 356,271 356.5,462.5 372,462.5 378,462.5 381,441 384,440 390,441.4 390.27,441.37 390.56,441.33 390.89,441.29 391.24,441.25 391.62,441.21 392.02,441.17 392.44,441.12 392.88,441.07 393.34,441.02 393.83,440.97 394.32,440.92 394.84,440.86 395.36,440.81 395.9,440.75 396.46,440.69 397.02,440.62 397.59,440.56 398.17,440.5 398.75,440.43 399.34,440.36 399.93,440.29 400.52,440.22 401.11,440.15 401.71,440.07 402.3,440 402.88,439.92 403.46,439.84 404.04,439.76 404.61,439.68 405.16,439.6 405.71,439.52 406.25,439.43 406.77,439.35 407.28,439.26 407.77,439.18 408.24,439.09 408.7,439 409.26,438.89 409.82,438.78 410.36,438.67 410.9,438.56 411.43,438.45 411.94,438.34 412.46,438.23 412.96,438.11 413.46,438 413.96,437.89 414.45,437.77 414.93,437.65 415.41,437.53 415.89,437.4 416.36,437.27 416.83,437.14 417.3,437 417.77,436.85 418.24,436.7 418.71,436.55 419.18,436.38 419.65,436.21 420.12,436.04 420.59,435.85 421.06,435.66 421.54,435.46 422.02,435.25 422.51,435.03 423,434.8 423.42,434.6 423.84,434.39 424.27,434.17 424.69,433.95 425.12,433.72 425.54,433.49 425.97,433.25 426.39,433 426.82,432.75 427.25,432.5 427.68,432.24 428.1,431.98 428.53,431.71 428.96,431.43 429.38,431.16 429.81,430.88 430.24,430.59 430.66,430.31 431.09,430.02 431.51,429.72 431.93,429.43 432.36,429.13 432.78,428.83 433.2,428.52 433.61,428.22 434.03,427.91 434.45,427.6 434.86,427.29 435.27,426.97 435.68,426.66 436.09,426.35 436.5,426.03 436.9,425.72 437.3,425.4 437.69,425.09 438.08,424.78 438.48,424.47 438.87,424.15 439.27,423.83 439.66,423.51 440.06,423.19 440.46,422.86 440.86,422.53 441.25,422.2 441.65,421.87 442.05,421.54 442.44,421.2 442.83,420.86 443.23,420.52 443.61,420.18 444,419.83 444.39,419.48 444.77,419.13 445.14,418.78 445.52,418.43 445.89,418.07 446.25,417.72 446.61,417.36 446.97,417 447.32,416.63 447.67,416.27 448.01,415.9 448.34,415.54 448.67,415.17 448.99,414.8 449.3,414.43 449.61,414.05 449.91,413.68 450.2,413.3 450.51,412.89 450.8,412.48 451.09,412.07 451.36,411.66 451.63,411.25 451.88,410.84 452.13,410.43 452.37,410.01 452.6,409.6 452.82,409.19 453.04,408.77 453.26,408.35 453.46,407.93 453.67,407.5 453.87,407.08 454.07,406.64 454.27,406.21 454.46,405.77 454.65,405.33 454.85,404.88 455.04,404.42 455.24,403.96 455.44,403.5 455.64,403.03 455.84,402.55 456.04,402.07 456.26,401.57 456.47,401.08 456.69,400.57 456.92,400.05 457.16,399.53 457.4,399 457.58,398.6 457.77,398.2 457.96,397.79 458.15,397.38 458.34,396.97 458.53,396.55 458.72,396.14 458.91,395.71 459.11,395.29 459.3,394.86 459.5,394.43 459.7,394 459.9,393.56 460.1,393.12 460.3,392.68 460.5,392.24 460.7,391.79 460.9,391.34 461.1,390.88 461.31,390.42 461.51,389.96 461.71,389.5 461.92,389.03 462.12,388.56 462.33,388.09 462.53,387.61 462.74,387.13 462.94,386.65 463.15,386.16 463.36,385.67 463.56,385.18 463.77,384.68 463.97,384.18 464.18,383.68 464.38,383.17 464.58,382.66 464.79,382.15 464.99,381.63 465.19,381.11 465.4,380.59 465.6,380.06 465.8,379.53 466,379 466.16,378.57 466.32,378.14 466.48,377.71 466.64,377.28 466.8,376.84 466.96,376.4 467.13,375.96 467.29,375.52 467.45,375.08 467.61,374.63 467.78,374.18 467.94,373.73 468.1,373.28 468.27,372.82 468.43,372.36 468.59,371.9 468.76,371.44 468.92,370.98 469.09,370.51 469.25,370.04 469.41,369.57 469.58,369.1 469.74,368.63 469.9,368.15 470.07,367.67 470.23,367.19 470.39,366.71 470.56,366.23 470.72,365.74 470.88,365.26 471.04,364.77 471.2,364.27 471.36,363.78 471.52,363.29 471.68,362.79 471.84,362.29 472,361.79 472.16,361.29 472.32,360.78 472.48,360.27 472.63,359.77 472.79,359.26 472.95,358.74 473.1,358.23 473.25,357.72 473.41,357.2 473.56,356.68 473.71,356.16 473.86,355.64 474.01,355.11 474.16,354.59 474.31,354.06 474.45,353.53 474.6,353 474.72,352.55 474.84,352.1 474.96,351.64 475.08,351.18 475.2,350.72 475.32,350.25 475.44,349.78 475.56,349.31 475.68,348.84 475.79,348.37 475.91,347.89 476.02,347.41 476.14,346.92 476.25,346.44 476.36,345.95 476.48,345.46 476.59,344.97 476.7,344.48 476.81,343.99 476.93,343.49 477.04,343 477.15,342.5 477.26,342 477.37,341.5 477.48,341 477.59,340.49 477.7,339.99 477.8,339.49 477.91,338.98 478.02,338.48 478.13,337.97 478.24,337.46 478.35,336.96 478.45,336.45 478.56,335.94 478.67,335.43 478.77,334.93 478.88,334.42 478.99,333.91 479.1,333.41 479.2,332.9 479.31,332.4 479.42,331.89 479.52,331.39 479.63,330.88 479.74,330.38 479.85,329.88 479.95,329.38 480.06,328.88 480.17,328.38 480.28,327.89 480.38,327.39 480.49,326.9 480.6,326.41 480.71,325.92 480.82,325.43 480.93,324.94 481.04,324.46 481.15,323.98 481.26,323.5 481.37,323.02 481.48,322.54 481.59,322.07 481.7,321.6 481.82,321.08 481.95,320.56 482.07,320.04 482.2,319.53 482.32,319 482.45,318.48 482.57,317.96 482.7,317.44 482.83,316.92 482.95,316.4 483.08,315.88 483.21,315.36 483.34,314.84 483.46,314.31 483.59,313.79 483.72,313.27 483.85,312.75 483.98,312.24 484.11,311.72 484.23,311.2 484.36,310.68 484.49,310.17 484.62,309.65 484.75,309.14 484.88,308.63 485,308.12 485.13,307.61 485.26,307.1 485.39,306.59 485.51,306.09 485.64,305.59 485.77,305.09 485.9,304.59 486.02,304.09 486.15,303.59 486.27,303.1 486.4,302.61 486.52,302.12 486.65,301.64 486.77,301.16 486.9,300.68 487.02,300.2 487.14,299.72 487.26,299.25 487.39,298.78 487.51,298.32 487.63,297.85 487.75,297.39 487.86,296.94 487.98,296.49 488.1,296.04 488.22,295.59 488.33,295.15 488.45,294.71 488.56,294.28 488.68,293.85 488.79,293.42 488.9,293 489.06,292.41 489.21,291.82 489.37,291.23 489.52,290.64 489.67,290.06 489.83,289.48 489.98,288.9 490.13,288.33 490.28,287.76 490.43,287.19 490.57,286.63 490.72,286.08 490.87,285.52 491.01,284.98 491.16,284.44 491.3,283.9 491.44,283.37 491.58,282.84 491.72,282.32 491.86,281.81 492,281.3 492.14,280.8 492.28,280.31 492.41,279.83 492.55,279.35 492.68,278.88 492.81,278.42 492.95,277.96 493.08,277.52 493.21,277.08 493.34,276.65 493.47,276.23 493.6,275.82 493.73,275.42 493.85,275.03 493.98,274.65 494.11,274.28 494.23,273.92 494.35,273.57 494.48,273.23 494.6,272.9 494.92,272.07 495.22,271.33 495.5,270.67 495.77,270.09 496.03,269.57 496.29,269.12 496.54,268.72 496.79,268.37 497.05,268.06 497.31,267.78 497.59,267.53 497.88,267.29 498.2,267.06 498.53,266.83 498.9,266.6 499.29,266.38 499.66,266.21 500.02,266.09 500.38,266.01 500.74,265.96 501.12,265.94 501.53,265.93 501.98,265.94 502.47,265.95 503.02,265.96 503.64,265.95 504.34,265.93 505.12,265.88 506,265.8 506.36,265.76 506.74,265.72 507.16,265.68 507.59,265.63 508.05,265.58 508.53,265.53 509.03,265.48 509.55,265.42 510.09,265.37 510.63,265.31 511.2,265.25 511.77,265.19 512.35,265.13 512.94,265.07 513.54,265 514.14,264.94 514.74,264.88 515.34,264.81 515.94,264.75 516.54,264.69 517.14,264.62 517.73,264.56 518.31,264.5 518.89,264.44 519.45,264.38 520,264.32 520.53,264.27 521.05,264.21 521.56,264.16 522.04,264.11 522.5,264.06 522.94,264.02 523.35,263.97 523.74,263.93 524.1,263.89 524.43,263.86 524.73,263.83 525,263.8" fill="none" stroke="#2080b0" stroke-width="1" shape-rendering="crispEdges"/>
<polyline points="72,187.5 78,186 85,184 90,183 108,182.6 123,180.5 138,181.5 152,180 161,178.5 177,177 210,178 214,177 233,176 234,176 234,158 235,158 235,176 236,178 240,175.5 260,174.5 290.5,174.5 290.5,160.5 290.5,462 293,466 299,360 299.01,359.75 299.02,359.48 299.03,359.21 299.04,358.93 299.04,358.65 299.05,358.35 299.06,358.05 299.07,357.74 299.08,357.43 299.1,357.1 299.11,356.77 299.12,356.43 299.13,356.09 299.14,355.74 299.15,355.38 299.16,355.01 299.17,354.64 299.19,354.26 299.2,353.88 299.21,353.48 299.22,353.09 299.24,352.68 299.25,352.27 299.26,351.86 299.28,351.43 299.29,351.01 299.31,350.57 299.32,350.14 299.33,349.69 299.35,349.24 299.36,348.79 299.38,348.33 299.39,347.86 299.41,347.39 299.42,346.92 299.44,346.44 299.45,345.96 299.47,345.47 299.48,344.98 299.5,344.48 299.52,343.98 299.53,343.48 299.55,342.97 299.56,342.45 299.58,341.94 299.6,341.42 299.62,340.89 299.63,340.37 299.65,339.84 299.67,339.3 299.68,338.77 299.7,338.23 299.72,337.68 299.74,337.14 299.75,336.59 299.77,336.04 299.79,335.49 299.81,334.93 299.83,334.37 299.84,333.81 299.86,333.25 299.88,332.69 299.9,332.12 299.92,331.55 299.94,330.98 299.95,330.41 299.97,329.84 299.99,329.26 300.01,328.69 300.03,328.11 300.05,327.53 300.07,326.95 300.09,326.37 300.11,325.79 300.13,325.21 300.14,324.63 300.16,324.05 300.18,323.46 300.2,322.88 300.22,322.3 300.24,321.71 300.26,321.13 300.28,320.55 300.3,319.96 300.32,319.38 300.34,318.8 300.36,318.22 300.38,317.64 300.4,317.06 300.42,316.48 300.44,315.9 300.46,315.32 300.48,314.74 300.5,314.17 300.52,313.6 300.54,313.02 300.56,312.45 300.58,311.88 300.59,311.32 300.61,310.75 300.63,310.19 300.65,309.63 300.67,309.07 300.69,308.51 300.71,307.96 300.73,307.41 300.75,306.86 300.77,306.31 300.79,305.77 300.81,305.23 300.83,304.69 300.85,304.15 300.87,303.62 300.89,303.09 300.91,302.57 300.92,302.05 300.94,301.53 300.96,301.02 300.98,300.51 301,300 301.02,299.5 301.04,299 301.06,298.5 301.07,298 301.09,297.49 301.11,296.98 301.13,296.47 301.15,295.96 301.17,295.45 301.19,294.93 301.21,294.42 301.23,293.9 301.25,293.38 301.26,292.85 301.28,292.33 301.3,291.8 301.32,291.28 301.34,290.75 301.36,290.22 301.38,289.69 301.4,289.15 301.42,288.62 301.44,288.09 301.46,287.55 301.48,287.01 301.5,286.48 301.52,285.94 301.54,285.4 301.56,284.86 301.58,284.32 301.6,283.78 301.62,283.23 301.64,282.69 301.66,282.15 301.68,281.6 301.7,281.06 301.72,280.52 301.75,279.97 301.77,279.43 301.79,278.88 301.81,278.34 301.83,277.79 301.85,277.25 301.87,276.7 301.89,276.16 301.91,275.61 301.93,275.07 301.95,274.52 301.97,273.98 301.99,273.44 302.01,272.89 302.04,272.35 302.06,271.81 302.08,271.27 302.1,270.73 302.12,270.19 302.14,269.65 302.16,269.11 302.18,268.57 302.2,268.04 302.22,267.5 302.25,266.97 302.27,266.43 302.29,265.9 302.31,265.37 302.33,264.84 302.35,264.31 302.37,263.79 302.39,263.26 302.42,262.74 302.44,262.21 302.46,261.69 302.48,261.18 302.5,260.66 302.52,260.14 302.54,259.63 302.56,259.12 302.58,258.61 302.61,258.1 302.63,257.6 302.65,257.09 302.67,256.59 302.69,256.09 302.71,255.6 302.73,255.1 302.75,254.61 302.78,254.12 302.8,253.64 302.82,253.15 302.84,252.67 302.86,252.19 302.88,251.72 302.9,251.24 302.92,250.77 302.94,250.3 302.96,249.84 302.99,249.38 303.01,248.92 303.03,248.47 303.05,248.01 303.07,247.57 303.09,247.12 303.11,246.68 303.13,246.24 303.15,245.81 303.17,245.37 303.19,244.95 303.21,244.52 303.24,244.1 303.26,243.68 303.28,243.27 303.3,242.86 303.32,242.46 303.34,242.06 303.36,241.66 303.38,241.27 303.4,240.88 303.42,240.49 303.44,240.11 303.46,239.74 303.48,239.37 303.5,239 303.54,238.21 303.59,237.45 303.63,236.7 303.68,235.96 303.72,235.24 303.76,234.54 303.81,233.86 303.85,233.19 303.89,232.53 303.94,231.89 303.98,231.26 304.03,230.65 304.07,230.05 304.11,229.46 304.16,228.88 304.2,228.32 304.25,227.77 304.29,227.22 304.33,226.69 304.38,226.18 304.42,225.67 304.46,225.17 304.51,224.67 304.55,224.19 304.59,223.72 304.64,223.25 304.68,222.79 304.73,222.34 304.77,221.9 304.81,221.46 304.85,221.03 304.9,220.6 304.94,220.18 304.98,219.77 305.03,219.35 305.07,218.95 305.11,218.54 305.15,218.14 305.2,217.74 305.24,217.35 305.28,216.95 305.32,216.56 305.37,216.17 305.41,215.78 305.45,215.39 305.49,215 305.53,214.6 305.57,214.21 305.62,213.82 305.66,213.43 305.7,213.03 305.74,212.63 305.78,212.23 305.82,211.82 305.86,211.41 305.9,211 305.96,210.38 306.02,209.76 306.08,209.15 306.13,208.55 306.19,207.96 306.24,207.38 306.3,206.8 306.35,206.23 306.4,205.67 306.46,205.12 306.51,204.57 306.56,204.03 306.61,203.5 306.66,202.97 306.71,202.45 306.77,201.94 306.82,201.43 306.87,200.93 306.92,200.44 306.97,199.95 307.02,199.47 307.08,199 307.13,198.53 307.19,198.07 307.24,197.61 307.3,197.15 307.35,196.71 307.41,196.26 307.47,195.83 307.53,195.4 307.59,194.97 307.66,194.55 307.72,194.13 307.79,193.71 307.86,193.31 307.93,192.9 308,192.5 308.12,191.84 308.25,191.21 308.37,190.59 308.5,190 308.62,189.43 308.75,188.87 308.89,188.33 309.02,187.81 309.16,187.3 309.29,186.81 309.44,186.33 309.58,185.86 309.73,185.4 309.89,184.95 310.05,184.5 310.21,184.06 310.38,183.63 310.55,183.2 310.73,182.77 310.91,182.35 311.1,181.93 311.3,181.5 311.53,181.01 311.77,180.53 312.02,180.05 312.27,179.59 312.53,179.13 312.8,178.68 313.07,178.24 313.34,177.81 313.63,177.39 313.91,176.98 314.21,176.58 314.51,176.19 314.82,175.81 315.13,175.44 315.45,175.08 315.78,174.73 316.11,174.39 316.45,174.06 316.8,173.75 317.2,173.41 317.6,173.09 318.02,172.78 318.44,172.48 318.88,172.2 319.32,171.92 319.77,171.67 320.23,171.42 320.69,171.19 321.16,170.97 321.64,170.76 322.12,170.57 322.61,170.39 323.1,170.22 323.6,170.07 324.1,169.93 324.6,169.8 325.08,169.7 325.57,169.61 326.07,169.54 326.57,169.49 327.08,169.46 327.59,169.43 328.11,169.42 328.64,169.42 329.16,169.43 329.69,169.44 330.23,169.46 330.76,169.48 331.3,169.51 331.84,169.53 332.38,169.56 332.92,169.58 333.46,169.59 334,169.6 334.49,169.61 334.98,169.62 335.49,169.63 335.99,169.64 336.5,169.66 337.02,169.67 337.54,169.69 338.05,169.71 338.57,169.73 339.09,169.76 339.6,169.78 340.12,169.8 340.62,169.83 341.13,169.85 341.63,169.88 342.12,169.9 342.6,169.93 343.08,169.95 343.54,169.98 344,170 344.56,170.02 345.13,170.03 345.69,170.03 346.24,170.02 346.8,170.01 347.34,170 347.88,170 348.4,169.99 348.91,170 349.41,170.02 349.89,170.04 350.36,170.09 350.8,170.16 351.22,170.25 351.62,170.36 352,170.5 352.51,170.78 352.97,171.14 353.4,171.56 353.78,172.03 354.14,172.53 354.45,173.03 354.74,173.53 355,173.99 355.22,174.4 355.42,174.74 355.6,175 356.5,470 360.5,400 360.5,399.75 360.51,399.48 360.51,399.21 360.51,398.93 360.51,398.64 360.52,398.34 360.52,398.03 360.52,397.71 360.53,397.38 360.53,397.05 360.53,396.71 360.53,396.36 360.54,396 360.54,395.63 360.54,395.26 360.54,394.88 360.55,394.49 360.55,394.1 360.55,393.69 360.55,393.28 360.56,392.86 360.56,392.44 360.56,392.01 360.57,391.57 360.57,391.13 360.57,390.67 360.58,390.22 360.58,389.75 360.58,389.28 360.58,388.81 360.59,388.33 360.59,387.84 360.6,387.35 360.6,386.85 360.6,386.35 360.61,385.84 360.61,385.32 360.62,384.8 360.62,384.28 360.62,383.75 360.63,383.22 360.63,382.68 360.64,382.14 360.65,381.59 360.65,381.04 360.66,380.48 360.66,379.92 360.67,379.36 360.67,378.79 360.68,378.22 360.69,377.65 360.69,377.07 360.7,376.49 360.71,375.91 360.72,375.32 360.72,374.73 360.73,374.14 360.74,373.54 360.75,372.94 360.76,372.34 360.77,371.74 360.78,371.14 360.79,370.53 360.8,369.92 360.81,369.31 360.82,368.7 360.83,368.08 360.84,367.47 360.85,366.85 360.86,366.23 360.87,365.61 360.89,364.99 360.9,364.37 360.91,363.75 360.93,363.12 360.94,362.5 360.95,361.87 360.97,361.25 360.98,360.62 361,360 361.01,359.58 361.02,359.16 361.03,358.73 361.04,358.3 361.05,357.87 361.06,357.43 361.08,356.99 361.09,356.54 361.1,356.09 361.11,355.64 361.12,355.18 361.13,354.72 361.15,354.26 361.16,353.79 361.17,353.32 361.18,352.85 361.2,352.37 361.21,351.89 361.22,351.41 361.23,350.93 361.25,350.44 361.26,349.95 361.27,349.46 361.29,348.96 361.3,348.46 361.32,347.96 361.33,347.46 361.34,346.95 361.36,346.45 361.37,345.94 361.39,345.43 361.4,344.91 361.41,344.4 361.43,343.88 361.44,343.36 361.46,342.84 361.47,342.32 361.49,341.79 361.5,341.27 361.52,340.74 361.53,340.21 361.55,339.68 361.56,339.15 361.58,338.62 361.6,338.09 361.61,337.55 361.63,337.02 361.64,336.48 361.66,335.94 361.68,335.41 361.69,334.87 361.71,334.33 361.73,333.79 361.74,333.25 361.76,332.71 361.78,332.17 361.79,331.62 361.81,331.08 361.83,330.54 361.84,330 361.86,329.46 361.88,328.92 361.9,328.38 361.91,327.83 361.93,327.29 361.95,326.75 361.97,326.21 361.98,325.67 362,325.13 362.02,324.59 362.04,324.06 362.06,323.52 362.07,322.98 362.09,322.45 362.11,321.91 362.13,321.38 362.15,320.85 362.17,320.32 362.18,319.79 362.2,319.26 362.22,318.73 362.24,318.21 362.26,317.68 362.28,317.16 362.3,316.64 362.32,316.12 362.34,315.6 362.36,315.09 362.38,314.57 362.39,314.06 362.41,313.55 362.43,313.05 362.45,312.54 362.47,312.04 362.49,311.54 362.51,311.04 362.53,310.54 362.55,310.05 362.57,309.56 362.59,309.07 362.61,308.59 362.63,308.11 362.65,307.63 362.67,307.15 362.69,306.68 362.71,306.21 362.73,305.74 362.75,305.28 362.77,304.82 362.79,304.36 362.81,303.91 362.83,303.46 362.86,303.01 362.88,302.57 362.9,302.13 362.92,301.7 362.94,301.27 362.96,300.84 362.98,300.42 363,300 363.03,299.38 363.06,298.75 363.1,298.14 363.13,297.52 363.16,296.9 363.19,296.29 363.23,295.68 363.26,295.08 363.29,294.47 363.33,293.87 363.36,293.27 363.4,292.68 363.43,292.08 363.47,291.49 363.5,290.91 363.54,290.32 363.57,289.74 363.61,289.16 363.64,288.58 363.68,288.01 363.72,287.44 363.75,286.87 363.79,286.3 363.83,285.74 363.86,285.18 363.9,284.63 363.94,284.08 363.98,283.53 364.01,282.98 364.05,282.44 364.09,281.9 364.13,281.36 364.17,280.83 364.2,280.3 364.24,279.77 364.28,279.25 364.32,278.73 364.36,278.21 364.4,277.7 364.44,277.19 364.48,276.68 364.52,276.18 364.56,275.68 364.59,275.18 364.63,274.69 364.67,274.2 364.71,273.72 364.75,273.24 364.79,272.76 364.83,272.29 364.87,271.82 364.91,271.36 364.95,270.89 364.99,270.44 365.03,269.98 365.07,269.53 365.11,269.09 365.15,268.64 365.19,268.21 365.23,267.77 365.27,267.34 365.31,266.92 365.34,266.5 365.38,266.08 365.42,265.67 365.46,265.26 365.5,264.85 365.54,264.45 365.58,264.06 365.62,263.67 365.66,263.28 365.7,262.9 365.73,262.52 365.77,262.15 365.81,261.78 365.85,261.41 365.89,261.05 365.92,260.7 365.96,260.35 366,260 366.1,259.13 366.2,258.34 366.3,257.62 366.4,256.98 366.5,256.4 366.6,255.88 366.7,255.41 366.8,254.99 366.9,254.61 367,254.26 367.1,253.94 367.2,253.64 367.3,253.36 367.4,253.08 367.5,252.81 367.6,252.54 367.7,252.26 367.8,251.96 367.9,251.64 368,251.3 368.1,250.92 368.2,250.5 368.3,250.04 368.4,249.52 368.5,248.95 368.6,248.31 368.7,247.6 368.8,246.82 368.9,245.95 369,245 369.03,244.66 369.07,244.31 369.1,243.94 369.14,243.57 369.17,243.18 369.21,242.78 369.24,242.37 369.28,241.94 369.31,241.51 369.35,241.07 369.39,240.62 369.42,240.16 369.46,239.68 369.5,239.2 369.53,238.72 369.57,238.22 369.61,237.71 369.65,237.2 369.69,236.68 369.72,236.15 369.76,235.62 369.8,235.08 369.84,234.53 369.88,233.98 369.92,233.42 369.96,232.86 369.99,232.29 370.03,231.71 370.07,231.14 370.11,230.56 370.15,229.97 370.19,229.38 370.23,228.79 370.27,228.2 370.31,227.6 370.34,227 370.38,226.4 370.42,225.8 370.46,225.19 370.5,224.59 370.54,223.98 370.57,223.38 370.61,222.77 370.65,222.17 370.69,221.56 370.72,220.96 370.76,220.36 370.8,219.76 370.84,219.16 370.87,218.56 370.91,217.97 370.94,217.37 370.98,216.79 371.02,216.2 371.05,215.62 371.09,215.04 371.12,214.47 371.15,213.9 371.19,213.34 371.22,212.78 371.26,212.23 371.29,211.68 371.32,211.14 371.35,210.6 371.38,210.08 371.42,209.56 371.45,209.04 371.48,208.54 371.51,208.04 371.53,207.55 371.56,207.07 371.59,206.6 371.62,206.14 371.65,205.69 371.67,205.24 371.7,204.81 371.73,204.39 371.75,203.98 371.77,203.58 371.8,203.19 371.82,202.81 371.84,202.45 371.87,202.1 371.89,201.76 371.91,201.43 371.93,201.12 371.95,200.82 371.97,200.53 371.98,200.26 372,200 377,470 381.5,470 381.8,250 383,177.8 383.09,177.51 383.18,177.12 383.29,176.67 383.41,176.16 383.54,175.6 383.69,175.03 383.85,174.44 384.04,173.87 384.24,173.32 384.47,172.81 384.72,172.37 385,172 385.35,171.64 385.7,171.35 386.06,171.11 386.45,170.91 386.88,170.74 387.35,170.6 387.89,170.46 388.5,170.32 389.2,170.17 390,170 390.36,169.92 390.75,169.84 391.15,169.76 391.56,169.68 392,169.6 392.45,169.52 392.91,169.44 393.39,169.36 393.87,169.28 394.37,169.2 394.88,169.12 395.4,169.04 395.93,168.97 396.46,168.89 397,168.82 397.55,168.75 398.1,168.68 398.65,168.62 399.21,168.56 399.77,168.5 400.33,168.44 400.89,168.39 401.44,168.34 402,168.3 402.47,168.27 402.95,168.23 403.44,168.2 403.94,168.18 404.45,168.15 404.97,168.12 405.5,168.1 406.04,168.08 406.58,168.06 407.12,168.04 407.67,168.03 408.22,168.01 408.77,168 409.31,167.99 409.86,167.98 410.4,167.97 410.94,167.96 411.47,167.96 412,167.95 412.51,167.95 413.02,167.95 413.52,167.95 414,167.95 414.48,167.96 414.93,167.96 415.38,167.97 415.8,167.98 416.21,167.99 416.6,168 417.35,168.03 418.04,168.06 418.67,168.1 419.25,168.14 419.79,168.19 420.3,168.25 420.78,168.31 421.23,168.38 421.68,168.46 422.12,168.55 422.57,168.65 423.03,168.76 423.5,168.87 424,169 424.47,169.13 424.91,169.27 425.35,169.42 425.76,169.58 426.18,169.74 426.59,169.92 427,170.1 427.42,170.29 427.86,170.48 428.31,170.68 428.79,170.88 429.29,171.08 429.82,171.29 430.39,171.49 431,171.7 431.39,171.83 431.79,171.96 432.2,172.09 432.63,172.23 433.06,172.38 433.51,172.52 433.97,172.67 434.44,172.82 434.91,172.97 435.39,173.12 435.88,173.28 436.38,173.43 436.88,173.58 437.38,173.73 437.89,173.88 438.4,174.03 438.91,174.18 439.43,174.32 439.94,174.46 440.46,174.6 440.97,174.73 441.48,174.85 441.99,174.98 442.5,175.09 443,175.2 443.48,175.3 443.97,175.39 444.46,175.48 444.95,175.57 445.45,175.65 445.95,175.72 446.45,175.79 446.96,175.86 447.47,175.93 447.97,175.99 448.48,176.06 448.99,176.12 449.5,176.17 450.01,176.23 450.52,176.29 451.03,176.35 451.53,176.41 452.04,176.46 452.55,176.52 453.05,176.59 453.55,176.65 454.05,176.71 454.54,176.78 455.03,176.85 455.52,176.92 456,177 456.51,177.09 457.02,177.18 457.51,177.27 458,177.36 458.47,177.46 458.94,177.55 459.41,177.65 459.87,177.75 460.34,177.85 460.8,177.95 461.26,178.05 461.72,178.16 462.19,178.26 462.67,178.36 463.15,178.46 463.64,178.56 464.14,178.66 464.64,178.76 465.16,178.85 465.7,178.95 466.25,179.04 466.81,179.13 467.4,179.22 468,179.3 468.44,179.36 468.88,179.42 469.34,179.47 469.81,179.53 470.28,179.59 470.76,179.64 471.25,179.7 471.75,179.75 472.25,179.81 472.76,179.86 473.28,179.91 473.79,179.96 474.32,180.02 474.84,180.07 475.38,180.12 475.91,180.17 476.44,180.22 476.98,180.27 477.52,180.32 478.06,180.37 478.6,180.41 479.14,180.46 479.68,180.51 480.21,180.55 480.75,180.6 481.28,180.65 481.81,180.69 482.34,180.74 482.86,180.78 483.38,180.83 483.89,180.87 484.4,180.91 484.9,180.96 485.4,181 485.92,181.05 486.43,181.09 486.93,181.14 487.42,181.19 487.91,181.24 488.39,181.29 488.87,181.34 489.34,181.39 489.81,181.44 490.28,181.49 490.74,181.53 491.21,181.58 491.67,181.63 492.14,181.68 492.6,181.72 493.07,181.77 493.54,181.81 494.01,181.85 494.49,181.89 494.98,181.93 495.47,181.97 495.97,182 496.47,182.04 496.99,182.07 497.51,182.09 498.04,182.12 498.59,182.14 499.14,182.16 499.71,182.17 500.29,182.19 500.89,182.19 501.5,182.2 501.93,182.2 502.38,182.2 502.84,182.2 503.31,182.19 503.8,182.18 504.31,182.17 504.82,182.16 505.35,182.15 505.89,182.13 506.43,182.11 506.98,182.1 507.55,182.08 508.11,182.05 508.69,182.03 509.27,182.01 509.85,181.98 510.44,181.96 511.02,181.93 511.61,181.9 512.2,181.88 512.79,181.85 513.38,181.82 513.96,181.79 514.55,181.76 515.12,181.73 515.7,181.7 516.27,181.67 516.83,181.64 517.38,181.61 517.92,181.58 518.46,181.55 518.98,181.52 519.49,181.49 520,181.47 520.48,181.44 520.96,181.41 521.42,181.39 521.86,181.36 522.29,181.34 522.7,181.32 523.09,181.29 523.46,181.28 523.81,181.26 524.14,181.24 524.45,181.22 524.74,181.21 525,181.2" fill="none" stroke="#74207c" stroke-width="1" shape-rendering="crispEdges"/>
<rect x="72" y="236" width="4" height="4" fill="#000" shape-rendering="crispEdges"/>
<rect x="76" y="240" width="1" height="3" fill="#000" shape-rendering="crispEdges"/>
<rect x="76" y="237" width="2" height="4" fill="#000" shape-rendering="crispEdges"/>
<rect x="78" y="236" width="3" height="4" fill="#000" shape-rendering="crispEdges"/>
<rect x="81" y="233" width="1" height="3" fill="#000" shape-rendering="crispEdges"/>
<rect x="78" y="240" width="1" height="3" fill="#000" shape-rendering="crispEdges"/>
<rect x="81" y="234" width="6" height="4" fill="#000" shape-rendering="crispEdges"/>
<rect x="85" y="233" width="1" height="3" fill="#000" shape-rendering="crispEdges"/>
<rect x="82" y="240" width="1" height="3" fill="#000" shape-rendering="crispEdges"/>
<rect x="87" y="236" width="6" height="4" fill="#000" shape-rendering="crispEdges"/>
<rect x="93" y="236" width="3" height="4" fill="#000" shape-rendering="crispEdges"/>
<rect x="96" y="240" width="1" height="3" fill="#000" shape-rendering="crispEdges"/>
<rect x="96" y="236" width="3" height="4" fill="#000" shape-rendering="crispEdges"/>
<rect x="99" y="236" width="3" height="4" fill="#000" shape-rendering="crispEdges"/>
<rect x="102" y="236" width="4" height="4" fill="#000" shape-rendering="crispEdges"/>
<rect x="102" y="240" width="1" height="3" fill="#000" shape-rendering="crispEdges"/>
<rect x="106" y="236" width="6" height="4" fill="#000" shape-rendering="crispEdges"/>
<rect x="112" y="238" width="4" height="4" fill="#000" shape-rendering="crispEdges"/>
<rect x="116" y="236" width="4" height="4" fill="#000" shape-rendering="crispEdges"/>
<rect x="120" y="236" width="3" height="4" fill="#000" shape-rendering="crispEdges"/>
<rect x="123" y="238" width="4" height="4" fill="#000" shape-rendering="crispEdges"/>
<rect x="127" y="234" width="2" height="4" fill="#000" shape-rendering="crispEdges"/>
<rect x="128" y="233" width="1" height="3" fill="#000" shape-rendering="crispEdges"/>
<rect x="128" y="240" width="1" height="3" fill="#000" shape-rendering="crispEdges"/>
<rect x="129" y="236" width="5" height="4" fill="#000" shape-rendering="crispEdges"/>
<rect x="133" y="240" width="1" height="3" fill="#000" shape-rendering="crispEdges"/>
<rect x="134" y="237" width="6" height="4" fill="#000" shape-rendering="crispEdges"/>
<rect x="140" y="238" width="5" height="4" fill="#000" shape-rendering="crispEdges"/>
<rect x="140" y="233" width="1" height="3" fill="#000" shape-rendering="crispEdges"/>
<rect x="145" y="236" width="5" height="4" fill="#000" shape-rendering="crispEdges"/>
<rect x="150" y="233" width="1" height="3" fill="#000" shape-rendering="crispEdges"/>
<rect x="150" y="238" width="6" height="4" fill="#000" shape-rendering="crispEdges"/>
<rect x="156" y="236" width="4" height="4" fill="#000" shape-rendering="crispEdges"/>
<rect x="160" y="236" width="6" height="4" fill="#000" shape-rendering="crispEdges"/>
<rect x="166" y="236" width="4" height="4" fill="#000" shape-rendering="crispEdges"/>
<rect x="170" y="236" width="5" height="4" fill="#000" shape-rendering="crispEdges"/>
<rect x="173" y="233" width="1" height="3" fill="#000" shape-rendering="crispEdges"/>
<rect x="175" y="234" width="3" height="4" fill="#000" shape-rendering="crispEdges"/>
<rect x="178" y="237" width="5" height="4" fill="#000" shape-rendering="crispEdges"/>
<rect x="183" y="236" width="3" height="4" fill="#000" shape-rendering="crispEdges"/>
<rect x="184" y="233" width="1" height="3" fill="#000" shape-rendering="crispEdges"/>
<rect x="186" y="236" width="3" height="4" fill="#000" shape-rendering="crispEdges"/>
<rect x="189" y="235" width="4" height="4" fill="#000" shape-rendering="crispEdges"/>
<rect x="192" y="233" width="1" height="3" fill="#000" shape-rendering="crispEdges"/>
<rect x="193" y="237" width="6" height="4" fill="#000" shape-rendering="crispEdges"/>
<rect x="199" y="236" width="6" height="4" fill="#000" shape-rendering="crispEdges"/>
<rect x="205" y="234" width="6" height="4" fill="#000" shape-rendering="crispEdges"/>
<rect x="211" y="234" width="5" height="4" fill="#000" shape-rendering="crispEdges"/>
<rect x="211" y="233" width="1" height="3" fill="#000" shape-rendering="crispEdges"/>
<rect x="216" y="236" width="5" height="4" fill="#000" shape-rendering="crispEdges"/>
<rect x="220" y="233" width="1" height="3" fill="#000" shape-rendering="crispEdges"/>
<rect x="216" y="240" width="1" height="3" fill="#000" shape-rendering="crispEdges"/>
<rect x="221" y="236" width="6" height="4" fill="#000" shape-rendering="crispEdges"/>
<rect x="227" y="236" width="6" height="4" fill="#000" shape-rendering="crispEdges"/>
<rect x="228" y="233" width="1" height="3" fill="#000" shape-rendering="crispEdges"/>
<rect x="233" y="235" width="3" height="4" fill="#000" shape-rendering="crispEdges"/>
<rect x="236" y="236" width="5" height="4" fill="#000" shape-rendering="crispEdges"/>
<rect x="239" y="233" width="1" height="3" fill="#000" shape-rendering="crispEdges"/>
<rect x="241" y="238" width="5" height="4" fill="#000" shape-rendering="crispEdges"/>
<rect x="241" y="240" width="1" height="3" fill="#000" shape-rendering="crispEdges"/>
<rect x="246" y="235" width="4" height="4" fill="#000" shape-rendering="crispEdges"/>
<rect x="250" y="236" width="6" height="4" fill="#000" shape-rendering="crispEdges"/>
<rect x="254" y="233" width="1" height="3" fill="#000" shape-rendering="crispEdges"/>
<rect x="256" y="236" width="6" height="4" fill="#000" shape-rendering="crispEdges"/>
<rect x="262" y="235" width="2" height="4" fill="#000" shape-rendering="crispEdges"/>
<rect x="264" y="236" width="4" height="4" fill="#000" shape-rendering="crispEdges"/>
<rect x="268" y="236" width="4" height="4" fill="#000" shape-rendering="crispEdges"/>
<rect x="272" y="236" width="3" height="4" fill="#000" shape-rendering="crispEdges"/>
<rect x="275" y="236" width="3" height="4" fill="#000" shape-rendering="crispEdges"/>
<rect x="278" y="236" width="2" height="4" fill="#000" shape-rendering="crispEdges"/>
<rect x="280" y="237" width="3" height="4" fill="#000" shape-rendering="crispEdges"/>
<rect x="283" y="237" width="4" height="4" fill="#000" shape-rendering="crispEdges"/>
<rect x="283" y="233" width="1" height="3" fill="#000" shape-rendering="crispEdges"/>
<rect x="287" y="237" width="3" height="4" fill="#000" shape-rendering="crispEdges"/>
<rect x="287" y="233" width="1" height="3" fill="#000" shape-rendering="crispEdges"/>
<rect x="290" y="236" width="2" height="4" fill="#000" shape-rendering="crispEdges"/>
<rect x="293" y="240" width="1" height="3" fill="#000" shape-rendering="crispEdges"/>
<rect x="292" y="236" width="2" height="4" fill="#000" shape-rendering="crispEdges"/>
<rect x="294" y="135" width="2" height="339" fill="#000" shape-rendering="crispEdges"/>
<rect x="306" y="237" width="3" height="3" fill="#000" shape-rendering="crispEdges"/>
<rect x="309" y="237" width="5" height="3" fill="#000" shape-rendering="crispEdges"/>
<rect x="314" y="237" width="3" height="3" fill="#000" shape-rendering="crispEdges"/>
<rect x="317" y="237" width="5" height="3" fill="#000" shape-rendering="crispEdges"/>
<rect x="322" y="237" width="4" height="3" fill="#000" shape-rendering="crispEdges"/>
<rect x="326" y="237" width="2" height="3" fill="#000" shape-rendering="crispEdges"/>
<rect x="328" y="237" width="5" height="3" fill="#000" shape-rendering="crispEdges"/>
<rect x="333" y="237" width="5" height="3" fill="#000" shape-rendering="crispEdges"/>
<rect x="338" y="237" width="5" height="3" fill="#000" shape-rendering="crispEdges"/>
<rect x="343" y="237" width="2" height="3" fill="#000" shape-rendering="crispEdges"/>
<rect x="345" y="237" width="3" height="3" fill="#000" shape-rendering="crispEdges"/>
<rect x="348" y="237" width="1" height="3" fill="#000" shape-rendering="crispEdges"/>
<rect x="318" y="234" width="1" height="3" fill="#000" shape-rendering="crispEdges"/>
<rect x="331" y="234" width="1" height="3" fill="#000" shape-rendering="crispEdges"/>
<rect x="337" y="234" width="1" height="3" fill="#000" shape-rendering="crispEdges"/>
<rect x="342" y="234" width="1" height="3" fill="#000" shape-rendering="crispEdges"/>
<rect x="345" y="234" width="1" height="3" fill="#000" shape-rendering="crispEdges"/>
<rect x="349" y="240" width="3" height="3" fill="#000" shape-rendering="crispEdges"/>
<rect x="352" y="240" width="2" height="3" fill="#000" shape-rendering="crispEdges"/>
<rect x="354" y="240" width="3" height="3" fill="#000" shape-rendering="crispEdges"/>
<rect x="356" y="240" width="2" height="234" fill="#000" shape-rendering="crispEdges"/>
<rect x="372" y="135" width="2" height="339" fill="#000" shape-rendering="crispEdges"/>
<rect x="376" y="135" width="1" height="200" fill="#000" shape-rendering="crispEdges"/>
<rect x="379" y="135" width="2" height="339" fill="#000" shape-rendering="crispEdges"/>
<rect x="372" y="348" width="4" height="126" fill="#000" shape-rendering="crispEdges"/>
<rect x="377" y="330" width="4" height="144" fill="#000" shape-rendering="crispEdges"/>
<rect x="381" y="247" width="3" height="6" fill="#000" shape-rendering="crispEdges"/>
<rect x="384" y="243" width="7" height="5" fill="#000" shape-rendering="crispEdges"/>
<rect x="390" y="240" width="6" height="3" fill="#000" shape-rendering="crispEdges"/>
<rect x="396" y="240" width="5" height="3" fill="#000" shape-rendering="crispEdges"/>
<rect x="401" y="240" width="3" height="3" fill="#000" shape-rendering="crispEdges"/>
<rect x="404" y="240" width="6" height="3" fill="#000" shape-rendering="crispEdges"/>
<rect x="410" y="240" width="6" height="3" fill="#000" shape-rendering="crispEdges"/>
<rect x="416" y="240" width="5" height="3" fill="#000" shape-rendering="crispEdges"/>
<rect x="421" y="240" width="4" height="3" fill="#000" shape-rendering="crispEdges"/>
<rect x="425" y="240" width="3" height="3" fill="#000" shape-rendering="crispEdges"/>
<rect x="428" y="240" width="4" height="3" fill="#000" shape-rendering="crispEdges"/>
<rect x="432" y="236" width="9" height="5" fill="#000" shape-rendering="crispEdges"/>
<rect x="441" y="237" width="5" height="3" fill="#000" shape-rendering="crispEdges"/>
<rect x="437" y="233" width="1" height="8" fill="#000" shape-rendering="crispEdges"/>
<rect x="441" y="240" width="1" height="4" fill="#000" shape-rendering="crispEdges"/>
<rect x="447" y="230" width="1" height="3" fill="#000" shape-rendering="crispEdges"/>
<rect x="450" y="230" width="1" height="3" fill="#000" shape-rendering="crispEdges"/>
<rect x="432" y="244" width="1" height="3" fill="#000" shape-rendering="crispEdges"/>
<rect x="440" y="244" width="1" height="3" fill="#000" shape-rendering="crispEdges"/>
<rect x="446" y="233" width="79" height="4" fill="#000" shape-rendering="crispEdges"/>
<rect x="452" y="237" width="1" height="2" fill="#000" shape-rendering="crispEdges"/>
<rect x="458" y="237" width="1" height="2" fill="#000" shape-rendering="crispEdges"/>
<rect x="463" y="237" width="1" height="2" fill="#000" shape-rendering="crispEdges"/>
<rect x="470" y="237" width="1" height="2" fill="#000" shape-rendering="crispEdges"/>
<rect x="476" y="237" width="1" height="2" fill="#000" shape-rendering="crispEdges"/>
<rect x="481" y="237" width="1" height="2" fill="#000" shape-rendering="crispEdges"/>
<rect x="489" y="237" width="1" height="2" fill="#000" shape-rendering="crispEdges"/>
<rect x="495" y="237" width="1" height="2" fill="#000" shape-rendering="crispEdges"/>
<rect x="500" y="237" width="1" height="2" fill="#000" shape-rendering="crispEdges"/>
<rect x="507" y="237" width="1" height="2" fill="#000" shape-rendering="crispEdges"/>
<rect x="512" y="237" width="1" height="2" fill="#000" shape-rendering="crispEdges"/>
<rect x="518" y="237" width="1" height="2" fill="#000" shape-rendering="crispEdges"/>
<rect x="524" y="232" width="1" height="1" fill="#000" shape-rendering="crispEdges"/>
<polyline points="297.5,474 298.2,360 298.21,359.74 298.21,359.48 298.22,359.2 298.22,358.92 298.23,358.62 298.24,358.32 298.25,358 298.25,357.68 298.26,357.35 298.27,357.01 298.28,356.65 298.28,356.3 298.29,355.93 298.3,355.55 298.31,355.17 298.32,354.77 298.33,354.37 298.33,353.96 298.34,353.55 298.35,353.12 298.36,352.69 298.37,352.26 298.38,351.81 298.39,351.36 298.4,350.9 298.41,350.44 298.42,349.97 298.43,349.49 298.44,349 298.45,348.52 298.46,348.02 298.47,347.52 298.48,347.01 298.49,346.5 298.51,345.99 298.52,345.46 298.53,344.94 298.54,344.41 298.55,343.87 298.56,343.33 298.57,342.79 298.59,342.24 298.6,341.69 298.61,341.13 298.62,340.58 298.63,340.01 298.65,339.45 298.66,338.88 298.67,338.31 298.68,337.73 298.7,337.16 298.71,336.58 298.72,336 298.73,335.41 298.75,334.83 298.76,334.24 298.77,333.65 298.79,333.06 298.8,332.47 298.81,331.88 298.83,331.28 298.84,330.69 298.85,330.09 298.87,329.49 298.88,328.9 298.89,328.3 298.91,327.7 298.92,327.11 298.93,326.51 298.95,325.91 298.96,325.32 298.97,324.72 298.99,324.13 299,323.53 299.01,322.94 299.03,322.35 299.04,321.76 299.05,321.17 299.07,320.58 299.08,320 299.1,319.42 299.11,318.84 299.12,318.26 299.14,317.69 299.15,317.11 299.16,316.54 299.18,315.98 299.19,315.41 299.2,314.85 299.22,314.3 299.23,313.74 299.24,313.2 299.26,312.65 299.27,312.11 299.28,311.57 299.3,311.04 299.31,310.51 299.32,309.99 299.34,309.47 299.35,308.96 299.36,308.45 299.38,307.95 299.39,307.45 299.4,306.96 299.42,306.47 299.43,306 299.44,305.52 299.45,305.06 299.47,304.59 299.48,304.14 299.49,303.69 299.5,303.25 299.52,302.82 299.53,302.39 299.54,301.98 299.55,301.56 299.56,301.16 299.58,300.77 299.59,300.38 299.6,300 299.62,299.26 299.65,298.53 299.67,297.82 299.69,297.12 299.71,296.43 299.74,295.76 299.76,295.1 299.78,294.46 299.8,293.83 299.82,293.21 299.84,292.6 299.86,292 299.88,291.41 299.9,290.84 299.92,290.27 299.94,289.72 299.97,289.17 299.99,288.64 300.01,288.11 300.03,287.59 300.05,287.08 300.07,286.58 300.09,286.09 300.11,285.6 300.13,285.12 300.15,284.65 300.17,284.18 300.19,283.72 300.21,283.26 300.23,282.81 300.25,282.37 300.27,281.93 300.3,281.49 300.32,281.06 300.34,280.63 300.36,280.2 300.38,279.78 300.41,279.36 300.43,278.94 300.45,278.52 300.48,278.1 300.5,277.69 300.52,277.27 300.55,276.86 300.57,276.45 300.6,276.03 300.62,275.62 300.65,275.2 300.68,274.78 300.7,274.36 300.73,273.94 300.76,273.52 300.79,273.09 300.82,272.66 300.84,272.23 300.87,271.79 300.91,271.35 300.94,270.91 300.97,270.46 301,270 301.04,269.45 301.08,268.89 301.12,268.33 301.16,267.77 301.21,267.21 301.25,266.64 301.29,266.07 301.34,265.5 301.38,264.93 301.43,264.36 301.48,263.79 301.52,263.22 301.57,262.64 301.62,262.07 301.67,261.5 301.72,260.93 301.77,260.37 301.82,259.8 301.87,259.24 301.92,258.68 301.97,258.12 302.02,257.57 302.08,257.02 302.13,256.48 302.18,255.94 302.23,255.4 302.29,254.87 302.34,254.35 302.39,253.83 302.45,253.32 302.5,252.82 302.55,252.32 302.61,251.83 302.66,251.35 302.72,250.87 302.77,250.41 302.82,249.95 302.88,249.5 302.93,249.07 302.98,248.64 303.04,248.22 303.09,247.82 303.14,247.42 303.19,247.04 303.25,246.67 303.3,246.31 303.35,245.96 303.4,245.63 303.45,245.31 303.5,245 303.73,243.78 303.96,242.82 304.2,242.09 304.43,241.54 304.66,241.15 304.9,240.88 305.13,240.68 305.35,240.53 305.58,240.4 305.79,240.23 306,240 306.58,239.45 307.16,239.19 307.65,239.09 308,239" fill="none" stroke="#000" stroke-width="1.6" shape-rendering="crispEdges"/>
<polyline points="358,474 358.5,360 358.51,359.75 358.51,359.48 358.52,359.21 358.53,358.92 358.53,358.63 358.54,358.33 358.55,358.02 358.55,357.7 358.56,357.37 358.57,357.04 358.58,356.69 358.59,356.34 358.59,355.98 358.6,355.61 358.61,355.23 358.62,354.85 358.63,354.46 358.64,354.06 358.64,353.65 358.65,353.24 358.66,352.82 358.67,352.39 358.68,351.96 358.69,351.52 358.7,351.07 358.71,350.62 358.72,350.16 358.73,349.7 358.74,349.23 358.75,348.75 358.76,348.27 358.77,347.78 358.78,347.29 358.79,346.79 358.8,346.29 358.81,345.78 358.82,345.27 358.83,344.75 358.84,344.23 358.86,343.7 358.87,343.17 358.88,342.64 358.89,342.1 358.9,341.56 358.91,341.02 358.92,340.47 358.94,339.92 358.95,339.36 358.96,338.8 358.97,338.24 358.99,337.68 359,337.11 359.01,336.54 359.02,335.97 359.04,335.4 359.05,334.82 359.06,334.24 359.07,333.66 359.09,333.08 359.1,332.5 359.11,331.92 359.13,331.33 359.14,330.74 359.15,330.16 359.17,329.57 359.18,328.98 359.19,328.39 359.21,327.8 359.22,327.21 359.24,326.62 359.25,326.03 359.26,325.44 359.28,324.85 359.29,324.26 359.31,323.67 359.32,323.08 359.33,322.5 359.35,321.91 359.36,321.32 359.38,320.74 359.39,320.16 359.41,319.58 359.42,319 359.44,318.42 359.45,317.84 359.47,317.27 359.48,316.7 359.5,316.13 359.51,315.56 359.53,315 359.54,314.44 359.56,313.88 359.57,313.33 359.59,312.77 359.6,312.23 359.62,311.68 359.63,311.14 359.65,310.6 359.66,310.07 359.68,309.54 359.7,309.01 359.71,308.49 359.73,307.97 359.74,307.46 359.76,306.95 359.78,306.45 359.79,305.95 359.81,305.46 359.82,304.97 359.84,304.49 359.85,304.01 359.87,303.54 359.89,303.08 359.9,302.62 359.92,302.17 359.94,301.72 359.95,301.28 359.97,300.85 359.98,300.42 360,300 360.02,299.38 360.05,298.75 360.07,298.14 360.1,297.52 360.12,296.9 360.15,296.29 360.17,295.68 360.2,295.08 360.22,294.47 360.25,293.87 360.27,293.27 360.3,292.68 360.33,292.08 360.35,291.49 360.38,290.91 360.4,290.32 360.43,289.74 360.46,289.16 360.48,288.58 360.51,288.01 360.54,287.44 360.56,286.87 360.59,286.3 360.62,285.74 360.64,285.18 360.67,284.63 360.7,284.08 360.73,283.53 360.75,282.98 360.78,282.44 360.81,281.9 360.84,281.36 360.87,280.83 360.89,280.3 360.92,279.77 360.95,279.25 360.98,278.73 361.01,278.21 361.04,277.7 361.07,277.19 361.1,276.68 361.13,276.18 361.16,275.68 361.19,275.18 361.22,274.69 361.25,274.2 361.28,273.72 361.31,273.24 361.34,272.76 361.37,272.29 361.4,271.82 361.44,271.36 361.47,270.89 361.5,270.44 361.53,269.98 361.56,269.53 361.6,269.09 361.63,268.64 361.66,268.21 361.69,267.77 361.73,267.34 361.76,266.92 361.79,266.5 361.83,266.08 361.86,265.67 361.9,265.26 361.93,264.85 361.97,264.45 362,264.06 362.04,263.67 362.07,263.28 362.11,262.9 362.14,262.52 362.18,262.15 362.22,261.78 362.25,261.41 362.29,261.05 362.33,260.7 362.36,260.35 362.4,260 362.5,259.1 362.61,258.25 362.72,257.43 362.83,256.66 362.95,255.91 363.07,255.21 363.19,254.54 363.32,253.89 363.44,253.28 363.57,252.7 363.7,252.15 363.83,251.62 363.96,251.12 364.09,250.64 364.22,250.19 364.36,249.75 364.49,249.34 364.62,248.94 364.75,248.55 364.87,248.19 365,247.83 365.12,247.49 365.24,247.16 365.36,246.83 365.48,246.52 365.59,246.21 365.7,245.9 365.8,245.6 365.9,245.3 366,245 366.35,243.92 366.63,243.21 366.86,242.77 367.09,242.52 367.33,242.36 367.62,242.22 368,242 368.43,241.77 368.95,241.59 369.53,241.43 370.12,241.31 370.71,241.21 371.23,241.13 371.68,241.06 372,241" fill="none" stroke="#000" stroke-width="2" shape-rendering="crispEdges"/>
</svg>
<div class="a" style="left:22px;top:544px;width:581px;height:2px;background:#D4D0C8"></div>
<div class="a lg" style="left:22px;width:95px;color:#33cc33">RFD-10MS<span class="cj">試料室</span><br>CH1 [mV]<br>-0.0</div>
<div class="a lg" style="left:119px;width:95px;color:#2080b0">FDU-2110<span class="cj">試料室</span><br>CH2 [mV]<br>4.3</div>
<div class="a lg" style="left:216px;width:95px;color:#0000a0">HALL<br>CH3 [mV]<br>9.6</div>
<div class="a lg" style="left:313px;width:95px;color:#c00000">FDU-830<span class="cj">試料室</span><br>CH4 [mV]<br>10.1</div>
<div class="a lg" style="left:410px;width:95px;color:#800080">FDU-830<span class="cj">トラップ</span><br>CH5 [mV]<br>1.9</div>
<div class="a lg" style="left:507px;width:96px;color:#000">FDU-2110<span class="cj">トラップ</span><br>CH6 [mV]<br>3.4</div>

<!-- lower panel -->
<div class="a" style="left:14px;top:604px;width:600px;height:40px;box-shadow:inset 1px 1px #fff,inset -1px -1px #808080"></div>
<div class="a raised" style="left:22px;top:612px;width:81px;height:25px"></div>
<div class="a" style="left:29px;top:616px;font-size:13px;line-height:16px;white-space:nowrap;transform:scaleX(0.69);transform-origin:0 0">アラームリセット</div>
<div class="a" style="left:110px;top:612px;width:494px;height:25px;background:#fff;box-shadow:inset 1px 1px #808080,inset -1px -1px #fff,inset 2px 2px #404040,inset -2px -2px #D4D0C8"></div>
<div class="a raised" style="left:587px;top:614px;width:15px;height:21px"></div>
<svg class="a" style="left:587px;top:614px" width="15" height="21"><path d="M4 9h7l-3.5 4z" fill="#000"/></svg>


<!-- status bar -->
<div class="a" style="left:0;top:719px;width:150px;height:19px;box-shadow:inset 1px 1px #808080,inset -1px -1px #fff"></div>
<div class="a" style="left:1px;top:720px;font-size:12px;line-height:14px;white-space:nowrap"><span style="letter-spacing:-0.5px">保存</span><span style="letter-spacing:-3px">ウェイト</span><span style="margin-left:-1px;letter-spacing:-0.5px">！！</span></div>
<div class="a" style="left:152px;top:719px;width:871px;height:19px;box-shadow:inset 1px 1px #808080,inset -1px -1px #fff"></div>

<!-- taskbar -->
<div class="a" style="left:0;top:738px;width:1024px;height:30px;background:#D4D0C8;box-shadow:inset 0 1px #D4D0C8,inset 0 2px #fff"></div>
<div class="a raised" style="left:2px;top:742px;width:62px;height:22px"></div>
<svg class="a" style="left:4px;top:744px" width="17" height="16" viewBox="0 0 17 16">
<path d="M3 2 Q5 1 8 2 L7 7 Q4 6 2 7Z" fill="#e8602a"/>
<path d="M9 3 Q12 4 15 3 L14 8 Q11 9 8 8Z" fill="#6cc030"/>
<path d="M2 8 Q4 7 7 8 L6 13 Q3 12 1 13Z" fill="#3a78e0"/>
<path d="M8 9 Q11 10 14 9 L13 14 Q10 15 7 14Z" fill="#f0c020"/>
</svg>
<div class="a" style="left:21px;top:746px;font-weight:bold;font-size:12px;line-height:14px;white-space:nowrap;letter-spacing:-2px;-webkit-text-stroke:0.3px #000">スタート</div>
<svg class="a" style="left:71px;top:745px" width="18" height="17" viewBox="0 0 18 17">
<path d="M4.2 9 H13.8 A4.9 4.9 0 1 0 12.6 12.4" stroke="#2f86e0" stroke-width="2.8" fill="none"/>
<path d="M1.5 15.5 Q3 7 16.5 1.5" stroke="#5aa8f0" stroke-width="1.4" fill="none"/>
</svg>
<svg class="a" style="left:95px;top:746px" width="17" height="15" viewBox="0 0 17 15">
<path d="M1 3 H6 L7 4 H15 V13 H1Z" fill="#d8a830" stroke="#a07010" stroke-width="0.8"/>
<path d="M1 6 H16 L15 13 H1Z" fill="#f0d060"/>
<circle cx="8" cy="8.5" r="3" fill="#c8e8f8" stroke="#6090b0" stroke-width="0.8"/>
</svg>
<svg class="a" style="left:117px;top:745px" width="18" height="17" viewBox="0 0 18 17">
<rect x="1" y="2" width="14" height="14" rx="2" fill="#2a70c8"/>
<rect x="3" y="4" width="10" height="10" fill="#e8f0ff"/>
<path d="M5 11 L11 5 L13 7 L7 13Z" fill="#2a70c8"/>
<circle cx="15" cy="3" r="2" fill="#e04040"/>
</svg>
<div class="a dither" style="left:142px;top:742px;width:161px;height:22px;box-shadow:inset 1px 1px #404040,inset -1px -1px #fff,inset 2px 2px #808080"></div>
<svg class="a" style="left:147px;top:746px" width="16" height="16" viewBox="0 0 16 16">
<rect x="0" y="0" width="16" height="16" fill="#2a2a3a"/>
<rect x="2" y="1" width="13" height="7" fill="#f8f8f8"/>
<rect x="2" y="3" width="6" height="1" fill="#9090d0"/><rect x="8" y="2" width="5" height="1" fill="#9090d0"/>
<rect x="2" y="4" width="5" height="1" fill="#c0a0c0"/><rect x="8" y="4" width="5" height="1" fill="#e0a060"/>
<rect x="13" y="3" width="1" height="2" fill="#400040"/>
<rect x="2" y="6" width="13" height="2" fill="#c8e8b0"/>
<rect x="1" y="9" width="15" height="1" fill="#c8c8c8"/>
<rect x="2" y="11" width="13" height="5" fill="#f8f8f8"/>
<rect x="3" y="12" width="3" height="3" fill="#b01010"/>
<rect x="7" y="12" width="3" height="3" fill="#0010b0"/>
<rect x="11" y="11" width="4" height="4" fill="#20d020"/>
</svg>
<div class="a" style="left:166px;top:747px;font-weight:bold;font-size:12px;line-height:14px;white-space:nowrap;-webkit-text-stroke:0.3px #000"><span style="letter-spacing:-2px">ソフトサーモ</span><span style="display:inline-block;width:10px"></span>E830</div>
<svg class="a" style="left:913px;top:747px" width="13" height="15" viewBox="0 0 13 15" shape-rendering="crispEdges"><rect x="4" y="0" width="1" height="5" fill="#000"/><rect x="5" y="1" width="1" height="1" fill="#000"/><rect x="6" y="2" width="1" height="1" fill="#000"/><rect x="7" y="1" width="1" height="1" fill="#000"/><rect x="8" y="2" width="1" height="1" fill="#000"/><rect x="9" y="1" width="1" height="1" fill="#000"/><rect x="10" y="2" width="1" height="1" fill="#000"/><rect x="11" y="1" width="1" height="1" fill="#000"/><rect x="12" y="2" width="1" height="1" fill="#000"/><rect x="0" y="5" width="13" height="10" fill="#000"/><rect x="1" y="6" width="11" height="8" fill="#fff"/><rect x="2" y="7" width="1" height="1" fill="#000"/><rect x="4" y="7" width="1" height="1" fill="#000"/><rect x="6" y="7" width="1" height="1" fill="#000"/><rect x="8" y="7" width="1" height="1" fill="#000"/><rect x="10" y="7" width="1" height="1" fill="#000"/><rect x="2" y="7" width="9" height="1" fill="#000" opacity="0.6"/><rect x="2" y="9" width="1" height="1" fill="#000"/><rect x="4" y="9" width="1" height="1" fill="#000"/><rect x="6" y="9" width="1" height="1" fill="#000"/><rect x="8" y="9" width="1" height="1" fill="#000"/><rect x="10" y="9" width="1" height="1" fill="#000"/><rect x="2" y="9" width="9" height="1" fill="#000" opacity="0.6"/><rect x="2" y="11" width="1" height="1" fill="#000"/><rect x="4" y="11" width="1" height="1" fill="#000"/><rect x="6" y="11" width="1" height="1" fill="#000"/><rect x="8" y="11" width="1" height="1" fill="#000"/><rect x="10" y="11" width="1" height="1" fill="#000"/><rect x="2" y="11" width="9" height="1" fill="#000" opacity="0.6"/></svg>
<div class="a" style="left:929px;top:742px;width:93px;height:23px;box-shadow:inset 1px 1px #808080,inset -1px -1px #fff"></div>
<svg class="a" style="left:934px;top:751px" width="10" height="7" viewBox="0 0 10 7"><path d="M4 0 L1 3.5 L4 7 M8 0 L5 3.5 L8 7" stroke="#000" stroke-width="1.6" fill="none"/></svg>
<svg class="a" style="left:947px;top:746px" width="15" height="16" viewBox="0 0 15 16">
<path d="M7.5 0.5 L14 3 Q14 11 7.5 15.5 Q1 11 1 3Z" fill="#f0e020" stroke="#5060a0" stroke-width="1"/>
<rect x="6.7" y="4" width="1.8" height="6" fill="#000"/><rect x="6.7" y="11" width="1.8" height="1.8" fill="#000"/>
</svg>
<svg class="a" style="left:966px;top:747px" width="13" height="13" viewBox="0 0 13 13">
<path d="M6.5 0.5 L8.3 4.5 L12.5 4.8 L9.3 7.6 L10.3 12 L6.5 9.7 L2.7 12 L3.7 7.6 L0.5 4.8 L4.7 4.5Z" fill="#f8e040" stroke="#c0a020" stroke-width="0.8"/>
</svg>
<div class="a" style="left:987px;top:747px;font-size:12px;line-height:14px;white-space:nowrap;letter-spacing:-0.3px">19:58</div>

</body></html>
